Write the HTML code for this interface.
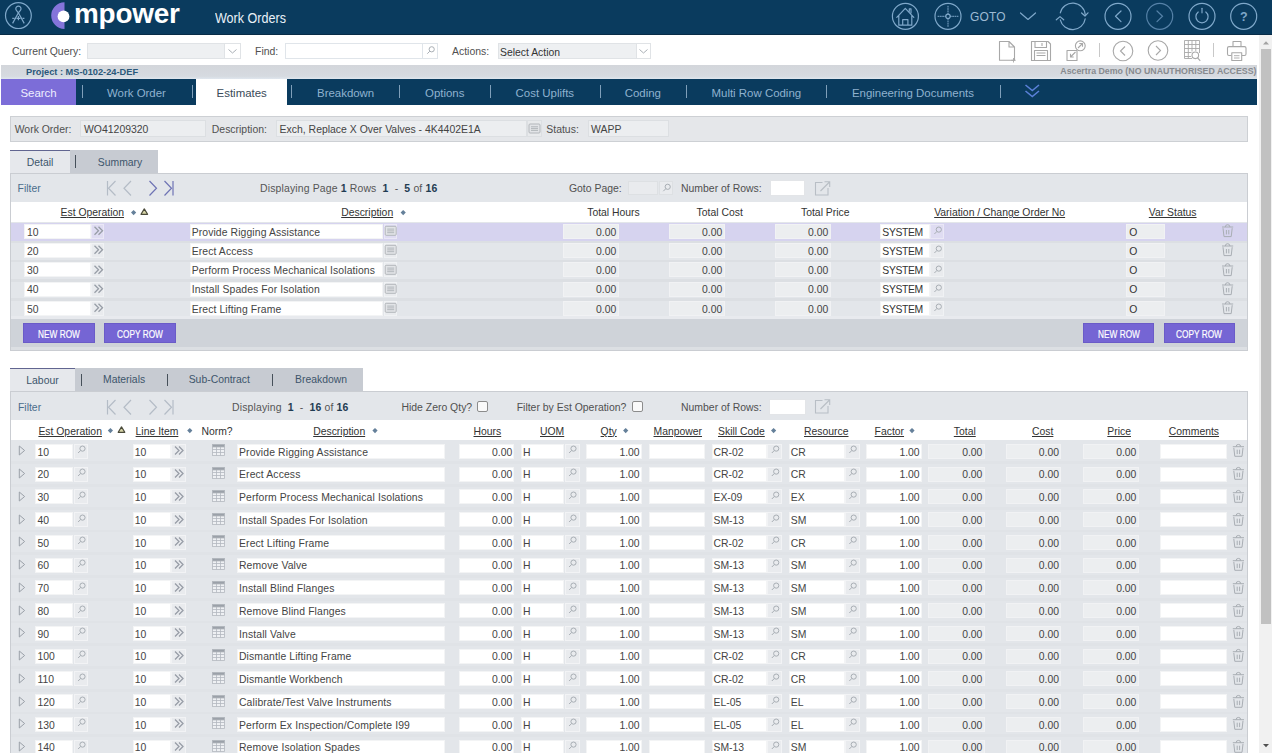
<!DOCTYPE html><html><head><meta charset="utf-8"><title>Work Orders</title><style>
html,body{margin:0;padding:0;width:1272px;height:753px;overflow:hidden;background:#fff;position:relative;font-family:"Liberation Sans",sans-serif;}
.t{position:absolute;white-space:pre;line-height:1;}
.b{position:absolute;box-sizing:border-box;}
svg.b{overflow:visible;}
.u{text-decoration:underline;text-underline-offset:1.5px;}
</style></head><body>
<div class="b" style="left:0.0px;top:0.0px;width:1272.0px;height:35.0px;background:#0a3b5e;"></div>
<div class="b" style="left:0.0px;top:34.0px;width:1272.0px;height:1.0px;background:#082c47;"></div>
<svg class="b" style="left:0px;top:0px;" width="40" height="35" viewBox="0 0 40 35"><g fill="none" stroke="#7fa8ca" stroke-width="1.2">
<circle cx="18.4" cy="15.6" r="12.9"/>
<path d="M18.4 12.8 L16.6 10.6 A2.6 2.6 0 1 1 20.2 10.6 Z"/>
<path d="M18.4 12.8 L12.6 23.4 M18.4 12.8 L24.2 23.4 M18.4 16 V20.3"/>
<path d="M12.3 18.3 H24.8" stroke-dasharray="1.6 0.5"/>
</g></svg>
<svg class="b" style="left:48px;top:0px;" width="30" height="35" viewBox="0 0 30 35"><path d="M64.5 2.3 A13.3 13.3 0 0 0 64.5 28.9 Z" transform="translate(-48 0)" fill="#8474da"/>
<circle cx="15.5" cy="16.4" r="5.9" fill="#ffffff"/></svg>
<div class="t" style="left:74.0px;top:-0.4px;font-size:27.9px;color:#ffffff;font-weight:bold;letter-spacing:-0.2px;">mpower</div>
<div class="t" style="left:215.2px;top:10.9px;font-size:14.2px;color:#e8f0f8;transform:scaleX(0.885);transform-origin:0 0;">Work Orders</div>
<svg class="b" style="left:0px;top:0px;" width="1272" height="35" viewBox="0 0 1272 35"><g fill="none" stroke="#7fa8ca" stroke-width="1.2" stroke-linejoin="round" stroke-linecap="round">
<circle cx="905.4" cy="16.3" r="13" fill="none" stroke="#7fa8ca" stroke-width="1.2" opacity="1.0"/>
<path d="M896.8 17.3 L905.3 8.3 L913.8 17.3 M898.8 15.3 V25.2 H911.8 V15.3 M902.7 25.2 V19.6 H907.9 V25.2 M909.3 11.3 V8.8 H911 V13"/>
<circle cx="948" cy="16.3" r="13" fill="none" stroke="#7fa8ca" stroke-width="1.2" opacity="1.0"/>
<path d="M948 6.2 V14 M948 18.6 V26.4 M938 16.3 H945.7 M950.3 16.3 H958" stroke-dasharray="1 1.3" stroke-width="1"/>
<circle cx="948" cy="16.3" r="2.2"/>
<path d="M1020.5 13 L1028 19.5 L1035.5 13"/>
<path d="M1060.3 12.8 A12.7 12.7 0 0 1 1085.3 14.8"/>
<path d="M1085.2 18.8 A12.7 12.7 0 0 1 1060.3 19.8"/>
<path d="M1081.6 13 L1085 16 L1088 12.8"/>
<path d="M1056.3 19.8 L1060 16.6 L1063.7 19.8"/>
<circle cx="1118" cy="16.3" r="13" fill="none" stroke="#7fa8ca" stroke-width="1.2" opacity="1.0"/>
<path d="M1121 11 L1115.5 16.3 L1121 21.6"/>
</g>
<g fill="none" stroke="#5682a8" stroke-width="1.2" stroke-linecap="round">
<circle cx="1159.7" cy="16.3" r="13" fill="none" stroke="#5682a8" stroke-width="1.2" opacity="1.0"/>
<path d="M1157 11 L1162.5 16.3 L1157 21.6"/>
</g>
<g fill="none" stroke="#7fa8ca" stroke-width="1.2" stroke-linecap="round">
<circle cx="1202" cy="16.3" r="13" fill="none" stroke="#7fa8ca" stroke-width="1.2" opacity="1.0"/>
<path d="M1198.2 12 A6.1 6.1 0 1 0 1205.8 12"/>
<path d="M1202 8.3 V12.8"/>
<circle cx="1243.7" cy="16.3" r="13" fill="none" stroke="#7fa8ca" stroke-width="1.2" opacity="1.0"/>
</g>
<text x="1243.9" y="21" font-family="Liberation Sans" font-size="12.5" font-weight="bold" fill="#7fa8ca" text-anchor="middle">?</text>
</svg>
<div class="t" style="left:969.8px;top:11.1px;font-size:12.6px;color:#9dbad3;letter-spacing:0.2px;transform:scaleX(0.95);transform-origin:0 0;">GOTO</div>
<div class="t" style="left:12.0px;top:47.2px;font-size:10.45px;color:#505050;">Current Query:</div>
<div class="b" style="left:87.0px;top:43.0px;width:154.0px;height:16.0px;background:#eef0f2;border:1px solid #e0e3e6;"></div>
<div class="b" style="left:224.0px;top:43.0px;width:17.0px;height:16.0px;background:#fff;border:1px solid #e0e3e6;"></div>
<svg class="b" style="left:224px;top:43px;" width="17" height="16" viewBox="0 0 17 16"><path d="M4.5 6.5 L8.5 10 L12.5 6.5" fill="none" stroke="#aab0b6" stroke-width="1"/></svg>
<div class="t" style="left:255.0px;top:47.2px;font-size:10.45px;color:#505050;">Find:</div>
<div class="b" style="left:285.0px;top:43.0px;width:153.0px;height:16.0px;background:#fff;border:1px solid #e0e5ea;"></div>
<div class="b" style="left:422.0px;top:43.0px;width:16.0px;height:16.0px;background:#fff;border:1px solid #e0e5ea;"></div>
<svg class="b" style="left:422px;top:43px;" width="16" height="16" viewBox="0 0 16 16"><g fill="none" stroke="#a8aeb4" stroke-width="1"><circle cx="9.7" cy="6.3" r="2.6"/><path d="M7.8 8.2 L5.3 10.7"/></g></svg>
<div class="t" style="left:452.0px;top:47.2px;font-size:10.45px;color:#505050;">Actions:</div>
<div class="b" style="left:498.0px;top:43.0px;width:153.0px;height:16.0px;background:#eef0f2;border:1px solid #e0e3e6;"></div>
<div class="b" style="left:636.0px;top:43.0px;width:15.0px;height:16.0px;background:#fff;border:1px solid #e0e3e6;"></div>
<svg class="b" style="left:636px;top:43px;" width="15" height="16" viewBox="0 0 15 16"><path d="M3.5 6.5 L7.5 10 L11.5 6.5" fill="none" stroke="#aab0b6" stroke-width="1"/></svg>
<div class="t" style="left:500.0px;top:47.5px;font-size:10.4px;color:#333;">Select Action</div>
<svg class="b" style="left:990px;top:36px;" width="270" height="28" viewBox="0 0 270 28"><g fill="none" stroke="#a8a8a8" stroke-width="1.1" stroke-linejoin="round">
<path d="M9.5 5.5 H19 L24.5 11 V24.3 H9.5 Z M19 5.5 V11 H24.5"/>
<path d="M23.5 22 V26.5 M21.3 24.3 H25.7" stroke-width="0.9"/>
<path d="M41.5 5.5 H58 L60.5 8 V24.5 H41.5 Z M45 5.5 V11.5 H56.5 V5.5 M44.5 24.5 V14.5 H57.5 V24.5 M52 7 V10 M46.5 17 H55.5 M46.5 19.5 H55.5"/>
<path d="M77 14.5 H87 V24.5 H77 Z M80.5 21 L85.5 16 M80.5 17.8 V21 H83.7 M88 12 L92.5 7.5 M89.3 7.5 H92.5 V10.7" />
<circle cx="90.3" cy="9.8" r="4.9"/>
</g>
<path d="M109.5 7 V21" stroke="#c8c8c8" stroke-width="1"/>
<g fill="none" stroke="#a8a8a8" stroke-width="1.1">
<circle cx="133" cy="15" r="9.8"/>
<path d="M135 10.5 L130.5 15 L135 19.5"/>
<circle cx="168" cy="14.5" r="9.8"/>
<path d="M166 10 L170.5 14.5 L166 19"/>
<path d="M194.5 4.5 H209.5 V17 M194.5 4.5 V22.5 H202 M194.5 8.5 H209.5 M194.5 12.5 H209.5 M194.5 16.5 H201.5 M194.5 20.5 H201 M198.3 4.5 V22.5 M202 4.5 V15.5 M205.8 4.5 V15" stroke-width="0.9"/>
<circle cx="205.3" cy="19.3" r="3.3"/>
<path d="M207.6 21.8 L210.3 24.8" />
</g>
<path d="M223.5 7 V21" stroke="#c8c8c8" stroke-width="1"/>
<g fill="none" stroke="#a8a8a8" stroke-width="1.1" stroke-linejoin="round">
<path d="M243 10.6 V5.5 H251 V10.6"/>
<path d="M241.5 19.5 H239 Q237.5 19.5 237.5 18 V12.1 Q237.5 10.6 239 10.6 H254.5 Q256 10.6 256 12.1 V18 Q256 19.5 254.5 19.5 H252"/>
<rect x="241.8" y="16.7" width="9.9" height="7.8" fill="#fff"/>
<path d="M244 19.7 H249.5 M244 22 H249.5" stroke-width="0.9"/>
</g>
</svg>
<div class="b" style="left:1.0px;top:64.5px;width:1256.0px;height:14.1px;background:linear-gradient(#d3d6db,#d6dae0 80%,#dfe6ee);"></div>
<div class="t" style="left:26.0px;top:68.4px;font-size:9.25px;color:#2a587a;font-weight:bold;">Project : MS-0102-24-DEF</div>
<div class="t" style="right:15.5px;top:67.4px;font-size:8.8px;color:#878a8e;font-weight:bold;">Ascertra Demo (NO UNAUTHORISED ACCESS)</div>
<div class="b" style="left:1.0px;top:78.6px;width:1256.0px;height:26.6px;background:#0a3b5e;"></div>
<div class="b" style="left:1.0px;top:78.6px;width:75.0px;height:26.6px;background:#7c6dd8;"></div>
<div class="b" style="left:196.0px;top:79.0px;width:91.0px;height:29.0px;background:#ffffff;"></div>
<div class="t" style="left:20.4px;top:87.9px;font-size:11.45px;color:#eeeeff;">Search</div>
<div class="t" style="left:107.0px;top:87.9px;font-size:11.45px;color:#8fb2cf;">Work Order</div>
<div class="t" style="left:216.6px;top:87.9px;font-size:11.45px;color:#3a4a58;">Estimates</div>
<div class="t" style="left:317.0px;top:87.9px;font-size:11.45px;color:#8fb2cf;">Breakdown</div>
<div class="t" style="left:425.0px;top:87.9px;font-size:11.45px;color:#8fb2cf;">Options</div>
<div class="t" style="left:515.6px;top:87.9px;font-size:11.45px;color:#8fb2cf;">Cost Uplifts</div>
<div class="t" style="left:624.7px;top:87.9px;font-size:11.45px;color:#8fb2cf;">Coding</div>
<div class="t" style="left:711.5px;top:87.9px;font-size:11.45px;color:#8fb2cf;">Multi Row Coding</div>
<div class="t" style="left:851.9px;top:87.9px;font-size:11.45px;color:#8fb2cf;">Engineering Documents</div>
<div class="b" style="left:82.0px;top:85.0px;width:1.0px;height:13.0px;background:#7f9fba;"></div>
<div class="b" style="left:192.0px;top:85.0px;width:1.0px;height:13.0px;background:#7f9fba;"></div>
<div class="b" style="left:291.0px;top:85.0px;width:1.0px;height:13.0px;background:#7f9fba;"></div>
<div class="b" style="left:399.0px;top:85.0px;width:1.0px;height:13.0px;background:#7f9fba;"></div>
<div class="b" style="left:490.0px;top:85.0px;width:1.0px;height:13.0px;background:#7f9fba;"></div>
<div class="b" style="left:600.0px;top:85.0px;width:1.0px;height:13.0px;background:#7f9fba;"></div>
<div class="b" style="left:686.0px;top:85.0px;width:1.0px;height:13.0px;background:#7f9fba;"></div>
<div class="b" style="left:826.0px;top:85.0px;width:1.0px;height:13.0px;background:#7f9fba;"></div>
<div class="b" style="left:1000.0px;top:85.0px;width:1.0px;height:13.0px;background:#7f9fba;"></div>
<svg class="b" style="left:1020px;top:80px;" width="25" height="22" viewBox="0 0 25 22"><g fill="none" stroke="#5a80d8" stroke-width="1.6" stroke-linejoin="miter"><path d="M5.5 5 L12.3 10.5 L19 5 M5.5 11 L12.3 16.5 L19 11"/></g></svg>
<div class="b" style="left:1259.0px;top:35.0px;width:13.0px;height:718.0px;background:#f1f1f1;"></div>
<div class="b" style="left:1261.0px;top:49.0px;width:10.0px;height:574.5px;background:#c1c1c1;"></div>
<svg class="b" style="left:1259px;top:35px;" width="13" height="718" viewBox="0 0 13 718"><path d="M4 9.5 L7 6.3 L10 9.5 Z" fill="#a3a3a3"/><path d="M4 709 L7 712.3 L10 709 Z" fill="#505050"/></svg>
<div class="b" style="left:10.0px;top:116.0px;width:1238.0px;height:25.8px;background:#e5e7ea;border:1px solid #cdd0d4;"></div>
<div class="t" style="left:14.7px;top:125.2px;font-size:10.45px;color:#505050;">Work Order:</div>
<div class="b" style="left:80.0px;top:120.0px;width:126.0px;height:17.0px;background:#eceef0;border:1px solid #dcdfe2;"></div>
<div class="t" style="left:84.0px;top:125.2px;font-size:10.45px;color:#444;">WO41209320</div>
<div class="t" style="left:211.8px;top:125.2px;font-size:10.45px;color:#505050;">Description:</div>
<div class="b" style="left:275.6px;top:120.0px;width:251.4px;height:17.0px;background:#eceef0;border:1px solid #dcdfe2;"></div>
<div class="t" style="left:279.6px;top:125.2px;font-size:10.45px;color:#444;">Exch, Replace X Over Valves - 4K4402E1A</div>
<div class="b" style="left:527.0px;top:120.0px;width:15.0px;height:17.0px;background:#e8eaec;border:1px solid #dcdfe2;"></div>
<svg class="b" style="left:527px;top:120px;" width="15" height="17" viewBox="0 0 15 17"><g fill="none" stroke="#adb1b6" stroke-width="0.9"><rect x="2" y="4" width="11" height="9" rx="1" fill="#e2e4e7"/><path d="M4 6.8 H11 M4 8.6 H11 M4 10.4 H11"/></g></svg>
<div class="t" style="left:546.3px;top:125.2px;font-size:10.45px;color:#505050;">Status:</div>
<div class="b" style="left:587.5px;top:120.0px;width:81.5px;height:17.0px;background:#eceef0;border:1px solid #dcdfe2;"></div>
<div class="t" style="left:591.0px;top:125.2px;font-size:10.45px;color:#444;">WAPP</div>
<div class="b" style="left:10.4px;top:150.0px;width:59.6px;height:23.5px;background:#e6e8ec;border-top:1.6px solid #616590;"></div>
<div class="b" style="left:70.0px;top:150.0px;width:88.0px;height:23.5px;background:#c7cbd2;"></div>
<div class="b" style="left:75.0px;top:154.5px;width:1.0px;height:13.0px;background:#46505a;"></div>
<div class="t" style="left:26.8px;top:158.1px;font-size:10.4px;color:#3d556b;">Detail</div>
<div class="t" style="left:97.8px;top:157.9px;font-size:10.4px;color:#3d556b;">Summary</div>
<div class="b" style="left:10.0px;top:173.0px;width:1238.0px;height:177.5px;background:#e3e6ea;border:1px solid #cacdd2;"></div>
<div class="b" style="left:11.0px;top:202.3px;width:1236.0px;height:20.0px;background:#ffffff;"></div>
<div class="t" style="left:17.6px;top:184.2px;font-size:10.4px;color:#4b6d8c;">Filter</div>
<svg class="b" style="left:105.5px;top:180.2px;" width="70" height="17" viewBox="0 0 70 17"><g fill="none" stroke-width="1.2" stroke-linejoin="miter">
<path d="M1.5 1 V15.5" stroke="#b4bcc6"/><path d="M9.5 1 L2.5 8.25 L9.5 15.5" stroke="#b4bcc6"/>
<path d="M25 1 L18 8.25 L25 15.5" stroke="#b4bcc6"/>
<path d="M43.5 1 L50.5 8.25 L43.5 15.5" stroke="#6e73b4"/>
<path d="M58.5 1 L65.5 8.25 L58.5 15.5" stroke="#6e73b4"/><path d="M67 1 V15.5" stroke="#6e73b4"/>
</g></svg>
<div class="t" style="left:260px;top:184.2px;font-size:10.45px;color:#555;letter-spacing:0.15px;">Displaying Page <b style="color:#1f3c52">1</b> Rows  <b style="color:#1f3c52">1</b>  -  <b style="color:#1f3c52">5</b> of <b style="color:#1f3c52">16</b></div>
<div class="t" style="left:568.9px;top:184.2px;font-size:10.45px;color:#505050;">Goto Page:</div>
<div class="b" style="left:627.8px;top:180.6px;width:30.7px;height:14.4px;background:#e9ebee;border:1px solid #dde0e3;"></div>
<div class="b" style="left:658.5px;top:180.6px;width:14.1px;height:14.4px;background:#e9ebee;border:1px solid #dde0e3;"></div>
<svg class="b" style="left:658.5px;top:180.6px;" width="14" height="15" viewBox="0 0 14 15"><g fill="none" stroke="#a8aeb4" stroke-width="1"><circle cx="8.7" cy="5.8" r="2.6"/><path d="M6.8 7.7 L4.3 10.2"/></g></svg>
<div class="t" style="left:681.0px;top:184.2px;font-size:10.45px;color:#505050;">Number of Rows:</div>
<div class="b" style="left:769.8px;top:180.2px;width:35.6px;height:15.8px;background:#ffffff;border:1px solid #e3e5e8;"></div>
<svg class="b" style="left:813px;top:179px;" width="20" height="18" viewBox="0 0 20 18"><g fill="none" stroke="#b8bec5" stroke-width="1.1"><path d="M9.5 3.5 H2.5 V16.0 H15.0 V9.0"/><path d="M7.5 12.0 L16.5 3.0 M11.5 2.7 H16.7 V8.0"/></g></svg>
<div class="t" style="left:60.5px;top:208.2px;font-size:10.4px;color:#333;text-decoration:underline;">Est Operation</div>
<svg class="b" style="left:0px;top:195px;" width="1272" height="30" viewBox="0 0 1272 30"><path d="M133.6 15.000000000000002 L136.2 17.6 L133.6 20.200000000000003 L131.0 17.6 Z" fill="#65809a"/><path d="M144.3 13.899999999999999 L147.60000000000002 19.299999999999997 L141.0 19.299999999999997 Z" fill="#d8d6a8" stroke="#4a4a3a" stroke-width="1.2" stroke-linejoin="round"/><path d="M403.2 15.000000000000002 L405.8 17.6 L403.2 20.200000000000003 L400.59999999999997 17.6 Z" fill="#65809a"/></svg>
<div class="t" style="left:341.2px;top:208.2px;font-size:10.4px;color:#333;text-decoration:underline;">Description</div>
<div class="t" style="left:587.2px;top:208.2px;font-size:10.4px;color:#333;">Total Hours</div>
<div class="t" style="left:696.6px;top:208.2px;font-size:10.4px;color:#333;">Total Cost</div>
<div class="t" style="left:801.0px;top:208.2px;font-size:10.4px;color:#333;">Total Price</div>
<div class="t" style="left:934.2px;top:208.2px;font-size:10.4px;color:#333;text-decoration:underline;">Variation / Change Order No</div>
<div class="t" style="left:1148.8px;top:208.2px;font-size:10.4px;color:#333;text-decoration:underline;">Var Status</div>
<div class="b" style="left:11.0px;top:222.5px;width:1236.0px;height:18.2px;background:#d6d3ef;"></div>
<div class="b" style="left:11.0px;top:240.7px;width:1236.0px;height:2.4px;background:#dcdfe3;"></div>
<div class="b" style="left:23.6px;top:223.8px;width:67.4px;height:15.2px;background:#ffffff;border:1px solid #f3f4f5;"></div>
<div class="t" style="left:27.0px;top:227.5px;font-size:10.4px;color:#444;">10</div>
<div class="b" style="left:91.0px;top:223.8px;width:13.0px;height:15.2px;background:rgba(255,255,255,0.22);border:1px solid rgba(255,255,255,0.35);"></div>
<div class="b" style="left:189.5px;top:223.8px;width:193.5px;height:15.2px;background:#ffffff;border:1px solid #f3f4f5;"></div>
<div class="t" style="left:191.7px;top:227.5px;font-size:10.4px;color:#444;letter-spacing:0.1px;">Provide Rigging Assistance</div>
<div class="b" style="left:383.5px;top:223.8px;width:13.5px;height:15.2px;background:rgba(255,255,255,0.22);border:1px solid rgba(255,255,255,0.35);"></div>
<div class="b" style="left:563.2px;top:223.8px;width:55.8px;height:15.2px;background:#eceef0;border:1px solid #f1f2f4;"></div>
<div class="t" style="right:655.8px;top:227.5px;font-size:10.4px;color:#444;">0.00</div>
<div class="b" style="left:668.5px;top:223.8px;width:56.5px;height:15.2px;background:#eceef0;border:1px solid #f1f2f4;"></div>
<div class="t" style="right:549.8px;top:227.5px;font-size:10.4px;color:#444;">0.00</div>
<div class="b" style="left:774.5px;top:223.8px;width:56.5px;height:15.2px;background:#eceef0;border:1px solid #f1f2f4;"></div>
<div class="t" style="right:443.8px;top:227.5px;font-size:10.4px;color:#444;">0.00</div>
<div class="b" style="left:880.0px;top:223.8px;width:50.0px;height:15.2px;background:#ffffff;border:1px solid #f3f4f5;"></div>
<div class="t" style="left:882.3px;top:227.5px;font-size:10.4px;color:#333;letter-spacing:-0.35px;">SYSTEM</div>
<div class="b" style="left:930.3px;top:223.8px;width:13.7px;height:15.2px;background:rgba(255,255,255,0.22);border:1px solid rgba(255,255,255,0.35);"></div>
<div class="b" style="left:1126.4px;top:223.8px;width:38.6px;height:15.2px;background:#eceef0;border:1px solid #f1f2f4;"></div>
<div class="t" style="left:1129.2px;top:227.5px;font-size:10.4px;color:#333;">O</div>
<svg class="b" style="left:0px;top:222px;" width="1272" height="19" viewBox="0 0 1272 19"><g fill="none" stroke="#979da6" stroke-width="1.3"><path d="M94.5 4.800000000000001 L98.5 8.8 L94.5 12.8 M98.5 4.800000000000001 L102.5 8.8 L98.5 12.8"/></g><g fill="none" stroke="#adb1b6" stroke-width="0.9"><rect x="385.2" y="4.3" width="11" height="9" rx="1" fill="#e2e4e7"/><path d="M387.2 7.1 H394.2 M387.2 8.899999999999999 H394.2 M387.2 10.7 H394.2"/></g><g fill="none" stroke="#a8aeb4" stroke-width="1"><circle cx="938.8000000000001" cy="7.6000000000000005" r="2.6"/><path d="M936.9 9.5 L934.4 12.0"/></g><g fill="none" stroke="#a9aeb4" stroke-width="1" stroke-linejoin="round"><path d="M1222.0 5.0 H1233.1999999999998"/><path d="M1225.3 5.0 A2.3 2.3 0 0 1 1229.8999999999999 5.0"/><path d="M1223.0 6.199999999999999 L1224.0 14.6 H1231.1999999999998 L1232.1999999999998 6.199999999999999"/><path d="M1226.3999999999999 8.0 V12.399999999999999 M1228.8 8.0 V12.399999999999999"/></g></svg>
<div class="b" style="left:11.0px;top:259.9px;width:1236.0px;height:2.4px;background:#dcdfe3;"></div>
<div class="b" style="left:23.6px;top:243.1px;width:67.4px;height:15.2px;background:#ffffff;border:1px solid #f3f4f5;"></div>
<div class="t" style="left:27.0px;top:246.7px;font-size:10.4px;color:#444;">20</div>
<div class="b" style="left:91.0px;top:243.1px;width:13.0px;height:15.2px;background:rgba(255,255,255,0.22);border:1px solid rgba(255,255,255,0.35);"></div>
<div class="b" style="left:189.5px;top:243.1px;width:193.5px;height:15.2px;background:#ffffff;border:1px solid #f3f4f5;"></div>
<div class="t" style="left:191.7px;top:246.7px;font-size:10.4px;color:#444;letter-spacing:0.1px;">Erect Access</div>
<div class="b" style="left:383.5px;top:243.1px;width:13.5px;height:15.2px;background:rgba(255,255,255,0.22);border:1px solid rgba(255,255,255,0.35);"></div>
<div class="b" style="left:563.2px;top:243.1px;width:55.8px;height:15.2px;background:#eceef0;border:1px solid #f1f2f4;"></div>
<div class="t" style="right:655.8px;top:246.7px;font-size:10.4px;color:#444;">0.00</div>
<div class="b" style="left:668.5px;top:243.1px;width:56.5px;height:15.2px;background:#eceef0;border:1px solid #f1f2f4;"></div>
<div class="t" style="right:549.8px;top:246.7px;font-size:10.4px;color:#444;">0.00</div>
<div class="b" style="left:774.5px;top:243.1px;width:56.5px;height:15.2px;background:#eceef0;border:1px solid #f1f2f4;"></div>
<div class="t" style="right:443.8px;top:246.7px;font-size:10.4px;color:#444;">0.00</div>
<div class="b" style="left:880.0px;top:243.1px;width:50.0px;height:15.2px;background:#ffffff;border:1px solid #f3f4f5;"></div>
<div class="t" style="left:882.3px;top:246.7px;font-size:10.4px;color:#333;letter-spacing:-0.35px;">SYSTEM</div>
<div class="b" style="left:930.3px;top:243.1px;width:13.7px;height:15.2px;background:rgba(255,255,255,0.22);border:1px solid rgba(255,255,255,0.35);"></div>
<div class="b" style="left:1126.4px;top:243.1px;width:38.6px;height:15.2px;background:#eceef0;border:1px solid #f1f2f4;"></div>
<div class="t" style="left:1129.2px;top:246.7px;font-size:10.4px;color:#333;">O</div>
<svg class="b" style="left:0px;top:241px;" width="1272" height="19" viewBox="0 0 1272 19"><g fill="none" stroke="#979da6" stroke-width="1.3"><path d="M94.5 4.800000000000001 L98.5 8.8 L94.5 12.8 M98.5 4.800000000000001 L102.5 8.8 L98.5 12.8"/></g><g fill="none" stroke="#adb1b6" stroke-width="0.9"><rect x="385.2" y="4.3" width="11" height="9" rx="1" fill="#e2e4e7"/><path d="M387.2 7.1 H394.2 M387.2 8.899999999999999 H394.2 M387.2 10.7 H394.2"/></g><g fill="none" stroke="#a8aeb4" stroke-width="1"><circle cx="938.8000000000001" cy="7.6000000000000005" r="2.6"/><path d="M936.9 9.5 L934.4 12.0"/></g><g fill="none" stroke="#a9aeb4" stroke-width="1" stroke-linejoin="round"><path d="M1222.0 5.0 H1233.1999999999998"/><path d="M1225.3 5.0 A2.3 2.3 0 0 1 1229.8999999999999 5.0"/><path d="M1223.0 6.199999999999999 L1224.0 14.6 H1231.1999999999998 L1232.1999999999998 6.199999999999999"/><path d="M1226.3999999999999 8.0 V12.399999999999999 M1228.8 8.0 V12.399999999999999"/></g></svg>
<div class="b" style="left:11.0px;top:279.2px;width:1236.0px;height:2.4px;background:#dcdfe3;"></div>
<div class="b" style="left:23.6px;top:262.3px;width:67.4px;height:15.2px;background:#ffffff;border:1px solid #f3f4f5;"></div>
<div class="t" style="left:27.0px;top:266.0px;font-size:10.4px;color:#444;">30</div>
<div class="b" style="left:91.0px;top:262.3px;width:13.0px;height:15.2px;background:rgba(255,255,255,0.22);border:1px solid rgba(255,255,255,0.35);"></div>
<div class="b" style="left:189.5px;top:262.3px;width:193.5px;height:15.2px;background:#ffffff;border:1px solid #f3f4f5;"></div>
<div class="t" style="left:191.7px;top:266.0px;font-size:10.4px;color:#444;letter-spacing:0.1px;">Perform Process Mechanical Isolations</div>
<div class="b" style="left:383.5px;top:262.3px;width:13.5px;height:15.2px;background:rgba(255,255,255,0.22);border:1px solid rgba(255,255,255,0.35);"></div>
<div class="b" style="left:563.2px;top:262.3px;width:55.8px;height:15.2px;background:#eceef0;border:1px solid #f1f2f4;"></div>
<div class="t" style="right:655.8px;top:266.0px;font-size:10.4px;color:#444;">0.00</div>
<div class="b" style="left:668.5px;top:262.3px;width:56.5px;height:15.2px;background:#eceef0;border:1px solid #f1f2f4;"></div>
<div class="t" style="right:549.8px;top:266.0px;font-size:10.4px;color:#444;">0.00</div>
<div class="b" style="left:774.5px;top:262.3px;width:56.5px;height:15.2px;background:#eceef0;border:1px solid #f1f2f4;"></div>
<div class="t" style="right:443.8px;top:266.0px;font-size:10.4px;color:#444;">0.00</div>
<div class="b" style="left:880.0px;top:262.3px;width:50.0px;height:15.2px;background:#ffffff;border:1px solid #f3f4f5;"></div>
<div class="t" style="left:882.3px;top:266.0px;font-size:10.4px;color:#333;letter-spacing:-0.35px;">SYSTEM</div>
<div class="b" style="left:930.3px;top:262.3px;width:13.7px;height:15.2px;background:rgba(255,255,255,0.22);border:1px solid rgba(255,255,255,0.35);"></div>
<div class="b" style="left:1126.4px;top:262.3px;width:38.6px;height:15.2px;background:#eceef0;border:1px solid #f1f2f4;"></div>
<div class="t" style="left:1129.2px;top:266.0px;font-size:10.4px;color:#333;">O</div>
<svg class="b" style="left:0px;top:261px;" width="1272" height="19" viewBox="0 0 1272 19"><g fill="none" stroke="#979da6" stroke-width="1.3"><path d="M94.5 4.800000000000001 L98.5 8.8 L94.5 12.8 M98.5 4.800000000000001 L102.5 8.8 L98.5 12.8"/></g><g fill="none" stroke="#adb1b6" stroke-width="0.9"><rect x="385.2" y="4.3" width="11" height="9" rx="1" fill="#e2e4e7"/><path d="M387.2 7.1 H394.2 M387.2 8.899999999999999 H394.2 M387.2 10.7 H394.2"/></g><g fill="none" stroke="#a8aeb4" stroke-width="1"><circle cx="938.8000000000001" cy="7.6000000000000005" r="2.6"/><path d="M936.9 9.5 L934.4 12.0"/></g><g fill="none" stroke="#a9aeb4" stroke-width="1" stroke-linejoin="round"><path d="M1222.0 5.0 H1233.1999999999998"/><path d="M1225.3 5.0 A2.3 2.3 0 0 1 1229.8999999999999 5.0"/><path d="M1223.0 6.199999999999999 L1224.0 14.6 H1231.1999999999998 L1232.1999999999998 6.199999999999999"/><path d="M1226.3999999999999 8.0 V12.399999999999999 M1228.8 8.0 V12.399999999999999"/></g></svg>
<div class="b" style="left:11.0px;top:298.4px;width:1236.0px;height:2.4px;background:#dcdfe3;"></div>
<div class="b" style="left:23.6px;top:281.6px;width:67.4px;height:15.2px;background:#ffffff;border:1px solid #f3f4f5;"></div>
<div class="t" style="left:27.0px;top:285.2px;font-size:10.4px;color:#444;">40</div>
<div class="b" style="left:91.0px;top:281.6px;width:13.0px;height:15.2px;background:rgba(255,255,255,0.22);border:1px solid rgba(255,255,255,0.35);"></div>
<div class="b" style="left:189.5px;top:281.6px;width:193.5px;height:15.2px;background:#ffffff;border:1px solid #f3f4f5;"></div>
<div class="t" style="left:191.7px;top:285.2px;font-size:10.4px;color:#444;letter-spacing:0.1px;">Install Spades For Isolation</div>
<div class="b" style="left:383.5px;top:281.6px;width:13.5px;height:15.2px;background:rgba(255,255,255,0.22);border:1px solid rgba(255,255,255,0.35);"></div>
<div class="b" style="left:563.2px;top:281.6px;width:55.8px;height:15.2px;background:#eceef0;border:1px solid #f1f2f4;"></div>
<div class="t" style="right:655.8px;top:285.2px;font-size:10.4px;color:#444;">0.00</div>
<div class="b" style="left:668.5px;top:281.6px;width:56.5px;height:15.2px;background:#eceef0;border:1px solid #f1f2f4;"></div>
<div class="t" style="right:549.8px;top:285.2px;font-size:10.4px;color:#444;">0.00</div>
<div class="b" style="left:774.5px;top:281.6px;width:56.5px;height:15.2px;background:#eceef0;border:1px solid #f1f2f4;"></div>
<div class="t" style="right:443.8px;top:285.2px;font-size:10.4px;color:#444;">0.00</div>
<div class="b" style="left:880.0px;top:281.6px;width:50.0px;height:15.2px;background:#ffffff;border:1px solid #f3f4f5;"></div>
<div class="t" style="left:882.3px;top:285.2px;font-size:10.4px;color:#333;letter-spacing:-0.35px;">SYSTEM</div>
<div class="b" style="left:930.3px;top:281.6px;width:13.7px;height:15.2px;background:rgba(255,255,255,0.22);border:1px solid rgba(255,255,255,0.35);"></div>
<div class="b" style="left:1126.4px;top:281.6px;width:38.6px;height:15.2px;background:#eceef0;border:1px solid #f1f2f4;"></div>
<div class="t" style="left:1129.2px;top:285.2px;font-size:10.4px;color:#333;">O</div>
<svg class="b" style="left:0px;top:280px;" width="1272" height="19" viewBox="0 0 1272 19"><g fill="none" stroke="#979da6" stroke-width="1.3"><path d="M94.5 4.800000000000001 L98.5 8.8 L94.5 12.8 M98.5 4.800000000000001 L102.5 8.8 L98.5 12.8"/></g><g fill="none" stroke="#adb1b6" stroke-width="0.9"><rect x="385.2" y="4.3" width="11" height="9" rx="1" fill="#e2e4e7"/><path d="M387.2 7.1 H394.2 M387.2 8.899999999999999 H394.2 M387.2 10.7 H394.2"/></g><g fill="none" stroke="#a8aeb4" stroke-width="1"><circle cx="938.8000000000001" cy="7.6000000000000005" r="2.6"/><path d="M936.9 9.5 L934.4 12.0"/></g><g fill="none" stroke="#a9aeb4" stroke-width="1" stroke-linejoin="round"><path d="M1222.0 5.0 H1233.1999999999998"/><path d="M1225.3 5.0 A2.3 2.3 0 0 1 1229.8999999999999 5.0"/><path d="M1223.0 6.199999999999999 L1224.0 14.6 H1231.1999999999998 L1232.1999999999998 6.199999999999999"/><path d="M1226.3999999999999 8.0 V12.399999999999999 M1228.8 8.0 V12.399999999999999"/></g></svg>
<div class="b" style="left:11.0px;top:317.7px;width:1236.0px;height:2.4px;background:#dcdfe3;"></div>
<div class="b" style="left:23.6px;top:300.8px;width:67.4px;height:15.2px;background:#ffffff;border:1px solid #f3f4f5;"></div>
<div class="t" style="left:27.0px;top:304.5px;font-size:10.4px;color:#444;">50</div>
<div class="b" style="left:91.0px;top:300.8px;width:13.0px;height:15.2px;background:rgba(255,255,255,0.22);border:1px solid rgba(255,255,255,0.35);"></div>
<div class="b" style="left:189.5px;top:300.8px;width:193.5px;height:15.2px;background:#ffffff;border:1px solid #f3f4f5;"></div>
<div class="t" style="left:191.7px;top:304.5px;font-size:10.4px;color:#444;letter-spacing:0.1px;">Erect Lifting Frame</div>
<div class="b" style="left:383.5px;top:300.8px;width:13.5px;height:15.2px;background:rgba(255,255,255,0.22);border:1px solid rgba(255,255,255,0.35);"></div>
<div class="b" style="left:563.2px;top:300.8px;width:55.8px;height:15.2px;background:#eceef0;border:1px solid #f1f2f4;"></div>
<div class="t" style="right:655.8px;top:304.5px;font-size:10.4px;color:#444;">0.00</div>
<div class="b" style="left:668.5px;top:300.8px;width:56.5px;height:15.2px;background:#eceef0;border:1px solid #f1f2f4;"></div>
<div class="t" style="right:549.8px;top:304.5px;font-size:10.4px;color:#444;">0.00</div>
<div class="b" style="left:774.5px;top:300.8px;width:56.5px;height:15.2px;background:#eceef0;border:1px solid #f1f2f4;"></div>
<div class="t" style="right:443.8px;top:304.5px;font-size:10.4px;color:#444;">0.00</div>
<div class="b" style="left:880.0px;top:300.8px;width:50.0px;height:15.2px;background:#ffffff;border:1px solid #f3f4f5;"></div>
<div class="t" style="left:882.3px;top:304.5px;font-size:10.4px;color:#333;letter-spacing:-0.35px;">SYSTEM</div>
<div class="b" style="left:930.3px;top:300.8px;width:13.7px;height:15.2px;background:rgba(255,255,255,0.22);border:1px solid rgba(255,255,255,0.35);"></div>
<div class="b" style="left:1126.4px;top:300.8px;width:38.6px;height:15.2px;background:#eceef0;border:1px solid #f1f2f4;"></div>
<div class="t" style="left:1129.2px;top:304.5px;font-size:10.4px;color:#333;">O</div>
<svg class="b" style="left:0px;top:299px;" width="1272" height="19" viewBox="0 0 1272 19"><g fill="none" stroke="#979da6" stroke-width="1.3"><path d="M94.5 4.800000000000001 L98.5 8.8 L94.5 12.8 M98.5 4.800000000000001 L102.5 8.8 L98.5 12.8"/></g><g fill="none" stroke="#adb1b6" stroke-width="0.9"><rect x="385.2" y="4.3" width="11" height="9" rx="1" fill="#e2e4e7"/><path d="M387.2 7.1 H394.2 M387.2 8.899999999999999 H394.2 M387.2 10.7 H394.2"/></g><g fill="none" stroke="#a8aeb4" stroke-width="1"><circle cx="938.8000000000001" cy="7.6000000000000005" r="2.6"/><path d="M936.9 9.5 L934.4 12.0"/></g><g fill="none" stroke="#a9aeb4" stroke-width="1" stroke-linejoin="round"><path d="M1222.0 5.0 H1233.1999999999998"/><path d="M1225.3 5.0 A2.3 2.3 0 0 1 1229.8999999999999 5.0"/><path d="M1223.0 6.199999999999999 L1224.0 14.6 H1231.1999999999998 L1232.1999999999998 6.199999999999999"/><path d="M1226.3999999999999 8.0 V12.399999999999999 M1228.8 8.0 V12.399999999999999"/></g></svg>
<div class="b" style="left:11.0px;top:319.0px;width:1236.0px;height:28.3px;background:#cfd3d9;"></div>
<div class="b" style="left:11.0px;top:347.3px;width:1236.0px;height:2.3px;background:#dcdfe3;"></div>
<div class="b" style="left:11.0px;top:316.4px;width:1236.0px;height:2.4px;background:#e8eaee;"></div>
<div class="b" style="left:23.3px;top:323.0px;width:71.4px;height:20.2px;background:#7565d4;border:1px solid #6a5bc8;"></div>
<div class="t" style="left:-241.0px;width:600px;text-align:center;top:329.4px;font-size:10.6px;color:#ffffff;transform:scaleX(0.78);-webkit-text-stroke:0.2px #fff;">NEW ROW</div>
<div class="b" style="left:104.0px;top:323.0px;width:71.8px;height:20.2px;background:#7565d4;border:1px solid #6a5bc8;"></div>
<div class="t" style="left:-160.1px;width:600px;text-align:center;top:329.4px;font-size:10.6px;color:#ffffff;transform:scaleX(0.78);-webkit-text-stroke:0.2px #fff;">COPY ROW</div>
<div class="b" style="left:1083.3px;top:323.0px;width:70.7px;height:20.2px;background:#7565d4;border:1px solid #6a5bc8;"></div>
<div class="t" style="left:818.7px;width:600px;text-align:center;top:329.4px;font-size:10.6px;color:#ffffff;transform:scaleX(0.78);-webkit-text-stroke:0.2px #fff;">NEW ROW</div>
<div class="b" style="left:1164.0px;top:323.0px;width:70.8px;height:20.2px;background:#7565d4;border:1px solid #6a5bc8;"></div>
<div class="t" style="left:899.4px;width:600px;text-align:center;top:329.4px;font-size:10.6px;color:#ffffff;transform:scaleX(0.78);-webkit-text-stroke:0.2px #fff;">COPY ROW</div>
<div class="b" style="left:10.4px;top:368.4px;width:64.2px;height:22.6px;background:#e6e8ec;border-top:1.6px solid #616590;"></div>
<div class="b" style="left:74.6px;top:368.4px;width:288.1px;height:22.6px;background:#c7cbd2;"></div>
<div class="b" style="left:81.0px;top:374.0px;width:1.0px;height:12.0px;background:#46505a;"></div>
<div class="b" style="left:167.0px;top:374.0px;width:1.0px;height:12.0px;background:#46505a;"></div>
<div class="b" style="left:272.0px;top:374.0px;width:1.0px;height:12.0px;background:#46505a;"></div>
<div class="t" style="left:26.3px;top:375.5px;font-size:10.4px;color:#3d556b;">Labour</div>
<div class="t" style="left:103.0px;top:374.8px;font-size:10.4px;color:#3d556b;">Materials</div>
<div class="t" style="left:188.7px;top:374.8px;font-size:10.4px;color:#3d556b;">Sub-Contract</div>
<div class="t" style="left:295.0px;top:374.8px;font-size:10.4px;color:#3d556b;">Breakdown</div>
<div class="b" style="left:10.0px;top:390.5px;width:1238.0px;height:369.5px;background:#e3e6ea;border:1px solid #cacdd2;"></div>
<div class="b" style="left:11.0px;top:420.3px;width:1236.0px;height:20.0px;background:#ffffff;"></div>
<div class="t" style="left:18.0px;top:402.7px;font-size:10.4px;color:#4b6d8c;">Filter</div>
<svg class="b" style="left:105.5px;top:398.5px;" width="70" height="17" viewBox="0 0 70 17"><g fill="none" stroke-width="1.2" stroke-linejoin="miter">
<path d="M1.5 1 V15.5" stroke="#b4bcc6"/><path d="M9.5 1 L2.5 8.25 L9.5 15.5" stroke="#b4bcc6"/>
<path d="M25 1 L18 8.25 L25 15.5" stroke="#b4bcc6"/>
<path d="M43.5 1 L50.5 8.25 L43.5 15.5" stroke="#b4bcc6"/>
<path d="M58.5 1 L65.5 8.25 L58.5 15.5" stroke="#b4bcc6"/><path d="M67 1 V15.5" stroke="#b4bcc6"/>
</g></svg>
<div class="t" style="left:232px;top:403.4px;font-size:10.45px;color:#555;letter-spacing:0.15px;">Displaying  <b style="color:#1f3c52">1</b>  -  <b style="color:#1f3c52">16</b> of <b style="color:#1f3c52">16</b></div>
<div class="t" style="left:401.4px;top:402.7px;font-size:10.45px;color:#505050;">Hide Zero Qty?</div>
<div class="b" style="left:477.2px;top:400.5px;width:11.0px;height:11.0px;background:#fafafa;border:1px solid #8c8c8c;border-radius:2px;"></div>
<div class="t" style="left:516.7px;top:402.7px;font-size:10.45px;color:#505050;">Filter by Est Operation?</div>
<div class="b" style="left:632.2px;top:400.5px;width:11.0px;height:11.0px;background:#fafafa;border:1px solid #8c8c8c;border-radius:2px;"></div>
<div class="t" style="left:681.0px;top:402.7px;font-size:10.45px;color:#505050;">Number of Rows:</div>
<div class="b" style="left:768.8px;top:398.5px;width:36.9px;height:16.0px;background:#ffffff;border:1px solid #e3e5e8;"></div>
<svg class="b" style="left:813px;top:397px;" width="20" height="18" viewBox="0 0 20 18"><g fill="none" stroke="#b8bec5" stroke-width="1.1"><path d="M9.5 3.5 H2.5 V16.0 H15.0 V9.0"/><path d="M7.5 12.0 L16.5 3.0 M11.5 2.7 H16.7 V8.0"/></g></svg>
<div class="t" style="left:38.4px;top:426.8px;font-size:10.4px;color:#333;text-decoration:underline;">Est Operation</div>
<div class="t" style="left:135.6px;top:426.8px;font-size:10.4px;color:#333;text-decoration:underline;">Line Item</div>
<div class="t" style="left:201.4px;top:426.8px;font-size:10.4px;color:#333;">Norm?</div>
<div class="t" style="left:313.2px;top:426.8px;font-size:10.4px;color:#333;text-decoration:underline;">Description</div>
<div class="t" style="left:473.5px;top:426.8px;font-size:10.4px;color:#333;text-decoration:underline;">Hours</div>
<div class="t" style="left:540.0px;top:426.8px;font-size:10.4px;color:#333;text-decoration:underline;">UOM</div>
<div class="t" style="left:600.6px;top:426.8px;font-size:10.4px;color:#333;text-decoration:underline;">Qty</div>
<div class="t" style="left:653.5px;top:426.8px;font-size:10.4px;color:#333;text-decoration:underline;">Manpower</div>
<div class="t" style="left:718.0px;top:426.8px;font-size:10.4px;color:#333;text-decoration:underline;">Skill Code</div>
<div class="t" style="left:804.0px;top:426.8px;font-size:10.4px;color:#333;text-decoration:underline;">Resource</div>
<div class="t" style="left:874.6px;top:426.8px;font-size:10.4px;color:#333;text-decoration:underline;">Factor</div>
<div class="t" style="left:953.8px;top:426.8px;font-size:10.4px;color:#333;text-decoration:underline;">Total</div>
<div class="t" style="left:1032.0px;top:426.8px;font-size:10.4px;color:#333;text-decoration:underline;">Cost</div>
<div class="t" style="left:1107.3px;top:426.8px;font-size:10.4px;color:#333;text-decoration:underline;">Price</div>
<div class="t" style="left:1168.8px;top:426.8px;font-size:10.4px;color:#333;text-decoration:underline;">Comments</div>
<svg class="b" style="left:0px;top:413px;" width="1272" height="30" viewBox="0 0 1272 30"><path d="M110.4 15.000000000000002 L113.0 17.6 L110.4 20.200000000000003 L107.80000000000001 17.6 Z" fill="#65809a"/><path d="M121.5 13.899999999999999 L124.8 19.299999999999997 L118.2 19.299999999999997 Z" fill="#d8d6a8" stroke="#4a4a3a" stroke-width="1.2" stroke-linejoin="round"/><path d="M189.8 15.000000000000002 L192.4 17.6 L189.8 20.200000000000003 L187.20000000000002 17.6 Z" fill="#65809a"/><path d="M375.0 15.000000000000002 L377.6 17.6 L375.0 20.200000000000003 L372.4 17.6 Z" fill="#65809a"/><path d="M625.7 15.000000000000002 L628.3000000000001 17.6 L625.7 20.200000000000003 L623.1 17.6 Z" fill="#65809a"/><path d="M773.6 15.000000000000002 L776.2 17.6 L773.6 20.200000000000003 L771.0 17.6 Z" fill="#65809a"/><path d="M912.0 15.000000000000002 L914.6 17.6 L912.0 20.200000000000003 L909.4 17.6 Z" fill="#65809a"/></svg>
<div class="b" style="left:11.0px;top:461.4px;width:1236.0px;height:2.7px;background:#e0e3e7;"></div>
<div class="b" style="left:34.8px;top:443.8px;width:38.7px;height:15.2px;background:#ffffff;border:1px solid #f3f4f5;"></div>
<div class="t" style="left:37.4px;top:447.7px;font-size:10.4px;color:#444;">10</div>
<div class="b" style="left:73.5px;top:443.8px;width:14.8px;height:15.2px;background:#e9ebee;border:1px solid #f2f3f5;"></div>
<div class="b" style="left:133.0px;top:443.8px;width:38.0px;height:15.2px;background:#ffffff;border:1px solid #f3f4f5;"></div>
<div class="t" style="left:134.8px;top:447.7px;font-size:10.4px;color:#444;">10</div>
<div class="b" style="left:171.0px;top:443.8px;width:15.0px;height:15.2px;background:#e9ebee;border:1px solid #f2f3f5;"></div>
<div class="b" style="left:237.3px;top:443.8px;width:208.0px;height:15.2px;background:#ffffff;border:1px solid #f3f4f5;"></div>
<div class="t" style="left:239.0px;top:447.7px;font-size:10.4px;color:#444;letter-spacing:0.12px;">Provide Rigging Assistance</div>
<div class="b" style="left:458.5px;top:443.8px;width:55.7px;height:15.2px;background:#ffffff;border:1px solid #f3f4f5;"></div>
<div class="t" style="right:759.8px;top:447.7px;font-size:10.4px;color:#444;">0.00</div>
<div class="b" style="left:520.6px;top:443.8px;width:43.9px;height:15.2px;background:#ffffff;border:1px solid #f3f4f5;"></div>
<div class="t" style="left:523.0px;top:447.7px;font-size:10.4px;color:#444;">H</div>
<div class="b" style="left:564.5px;top:443.8px;width:15.0px;height:15.2px;background:#e9ebee;border:1px solid #f2f3f5;"></div>
<div class="b" style="left:585.9px;top:443.8px;width:55.7px;height:15.2px;background:#ffffff;border:1px solid #f3f4f5;"></div>
<div class="t" style="right:632.4px;top:447.7px;font-size:10.4px;color:#444;">1.00</div>
<div class="b" style="left:648.7px;top:443.8px;width:56.0px;height:15.2px;background:#ffffff;border:1px solid #f3f4f5;"></div>
<div class="b" style="left:711.5px;top:443.8px;width:55.5px;height:15.2px;background:#ffffff;border:1px solid #f3f4f5;"></div>
<div class="t" style="left:713.5px;top:447.7px;font-size:10.4px;color:#444;">CR-02</div>
<div class="b" style="left:767.0px;top:443.8px;width:15.3px;height:15.2px;background:#e9ebee;border:1px solid #f2f3f5;"></div>
<div class="b" style="left:788.8px;top:443.8px;width:55.8px;height:15.2px;background:#ffffff;border:1px solid #f3f4f5;"></div>
<div class="t" style="left:790.8px;top:447.7px;font-size:10.4px;color:#444;">CR</div>
<div class="b" style="left:844.6px;top:443.8px;width:15.4px;height:15.2px;background:#e9ebee;border:1px solid #f2f3f5;"></div>
<div class="b" style="left:865.5px;top:443.8px;width:56.1px;height:15.2px;background:#ffffff;border:1px solid #f3f4f5;"></div>
<div class="t" style="right:352.4px;top:447.7px;font-size:10.4px;color:#444;">1.00</div>
<div class="b" style="left:928.4px;top:443.8px;width:56.4px;height:15.2px;background:#eceef0;border:1px solid #f1f2f4;"></div>
<div class="t" style="right:289.6px;top:447.7px;font-size:10.4px;color:#444;">0.00</div>
<div class="b" style="left:1005.8px;top:443.8px;width:55.5px;height:15.2px;background:#eceef0;border:1px solid #f1f2f4;"></div>
<div class="t" style="right:213.0px;top:447.7px;font-size:10.4px;color:#444;">0.00</div>
<div class="b" style="left:1083.0px;top:443.8px;width:55.7px;height:15.2px;background:#eceef0;border:1px solid #f1f2f4;"></div>
<div class="t" style="right:135.6px;top:447.7px;font-size:10.4px;color:#444;">0.00</div>
<div class="b" style="left:1159.7px;top:443.8px;width:67.1px;height:15.2px;background:#ffffff;border:1px solid #f3f4f5;"></div>
<svg class="b" style="left:0px;top:441px;" width="1272" height="20" viewBox="0 0 1272 20"><path d="M19.3 5.0 L24.6 9.5 L19.3 14.0 Z" fill="none" stroke="#9aa0a8" stroke-width="1"/><g fill="none" stroke="#a8aeb4" stroke-width="1"><circle cx="82.5" cy="7.6000000000000005" r="2.6"/><path d="M80.6 9.5 L78.1 12.0"/></g><g fill="none" stroke="#979da6" stroke-width="1.3"><path d="M175 5.5 L179 9.5 L175 13.5 M179 5.5 L183 9.5 L179 13.5"/></g><g fill="none" stroke="#b3b8bf" stroke-width="0.8"><rect x="212.5" y="3.5" width="12" height="11" fill="#eef0f3"/><path d="M212.5 8.5 H224.5 M212.5 11.5 H224.5 M216.5 5.5 V14.5 M220.5 5.5 V14.5"/><rect x="212.5" y="3.5" width="12" height="2.5" fill="#9ba1a9"/></g><g fill="none" stroke="#a8aeb4" stroke-width="1"><circle cx="573.5" cy="7.6000000000000005" r="2.6"/><path d="M571.5999999999999 9.5 L569.0999999999999 12.0"/></g><g fill="none" stroke="#a8aeb4" stroke-width="1"><circle cx="776.2" cy="7.6000000000000005" r="2.6"/><path d="M774.3 9.5 L771.8 12.0"/></g><g fill="none" stroke="#a8aeb4" stroke-width="1"><circle cx="853.7" cy="7.6000000000000005" r="2.6"/><path d="M851.8 9.5 L849.3 12.0"/></g><g fill="none" stroke="#a9aeb4" stroke-width="1" stroke-linejoin="round"><path d="M1232.8000000000002 5.700000000000001 H1244.0"/><path d="M1236.1000000000001 5.700000000000001 A2.3 2.3 0 0 1 1240.7 5.700000000000001"/><path d="M1233.8000000000002 6.9 L1234.8000000000002 15.3 H1242.0 L1243.0 6.9"/><path d="M1237.2 8.700000000000001 V13.100000000000001 M1239.6000000000001 8.700000000000001 V13.100000000000001"/></g></svg>
<div class="b" style="left:11.0px;top:484.2px;width:1236.0px;height:2.7px;background:#e0e3e7;"></div>
<div class="b" style="left:34.8px;top:466.6px;width:38.7px;height:15.2px;background:#ffffff;border:1px solid #f3f4f5;"></div>
<div class="t" style="left:37.4px;top:470.4px;font-size:10.4px;color:#444;">20</div>
<div class="b" style="left:73.5px;top:466.6px;width:14.8px;height:15.2px;background:#e9ebee;border:1px solid #f2f3f5;"></div>
<div class="b" style="left:133.0px;top:466.6px;width:38.0px;height:15.2px;background:#ffffff;border:1px solid #f3f4f5;"></div>
<div class="t" style="left:134.8px;top:470.4px;font-size:10.4px;color:#444;">10</div>
<div class="b" style="left:171.0px;top:466.6px;width:15.0px;height:15.2px;background:#e9ebee;border:1px solid #f2f3f5;"></div>
<div class="b" style="left:237.3px;top:466.6px;width:208.0px;height:15.2px;background:#ffffff;border:1px solid #f3f4f5;"></div>
<div class="t" style="left:239.0px;top:470.4px;font-size:10.4px;color:#444;letter-spacing:0.12px;">Erect Access</div>
<div class="b" style="left:458.5px;top:466.6px;width:55.7px;height:15.2px;background:#ffffff;border:1px solid #f3f4f5;"></div>
<div class="t" style="right:759.8px;top:470.4px;font-size:10.4px;color:#444;">0.00</div>
<div class="b" style="left:520.6px;top:466.6px;width:43.9px;height:15.2px;background:#ffffff;border:1px solid #f3f4f5;"></div>
<div class="t" style="left:523.0px;top:470.4px;font-size:10.4px;color:#444;">H</div>
<div class="b" style="left:564.5px;top:466.6px;width:15.0px;height:15.2px;background:#e9ebee;border:1px solid #f2f3f5;"></div>
<div class="b" style="left:585.9px;top:466.6px;width:55.7px;height:15.2px;background:#ffffff;border:1px solid #f3f4f5;"></div>
<div class="t" style="right:632.4px;top:470.4px;font-size:10.4px;color:#444;">1.00</div>
<div class="b" style="left:648.7px;top:466.6px;width:56.0px;height:15.2px;background:#ffffff;border:1px solid #f3f4f5;"></div>
<div class="b" style="left:711.5px;top:466.6px;width:55.5px;height:15.2px;background:#ffffff;border:1px solid #f3f4f5;"></div>
<div class="t" style="left:713.5px;top:470.4px;font-size:10.4px;color:#444;">CR-02</div>
<div class="b" style="left:767.0px;top:466.6px;width:15.3px;height:15.2px;background:#e9ebee;border:1px solid #f2f3f5;"></div>
<div class="b" style="left:788.8px;top:466.6px;width:55.8px;height:15.2px;background:#ffffff;border:1px solid #f3f4f5;"></div>
<div class="t" style="left:790.8px;top:470.4px;font-size:10.4px;color:#444;">CR</div>
<div class="b" style="left:844.6px;top:466.6px;width:15.4px;height:15.2px;background:#e9ebee;border:1px solid #f2f3f5;"></div>
<div class="b" style="left:865.5px;top:466.6px;width:56.1px;height:15.2px;background:#ffffff;border:1px solid #f3f4f5;"></div>
<div class="t" style="right:352.4px;top:470.4px;font-size:10.4px;color:#444;">1.00</div>
<div class="b" style="left:928.4px;top:466.6px;width:56.4px;height:15.2px;background:#eceef0;border:1px solid #f1f2f4;"></div>
<div class="t" style="right:289.6px;top:470.4px;font-size:10.4px;color:#444;">0.00</div>
<div class="b" style="left:1005.8px;top:466.6px;width:55.5px;height:15.2px;background:#eceef0;border:1px solid #f1f2f4;"></div>
<div class="t" style="right:213.0px;top:470.4px;font-size:10.4px;color:#444;">0.00</div>
<div class="b" style="left:1083.0px;top:466.6px;width:55.7px;height:15.2px;background:#eceef0;border:1px solid #f1f2f4;"></div>
<div class="t" style="right:135.6px;top:470.4px;font-size:10.4px;color:#444;">0.00</div>
<div class="b" style="left:1159.7px;top:466.6px;width:67.1px;height:15.2px;background:#ffffff;border:1px solid #f3f4f5;"></div>
<svg class="b" style="left:0px;top:464px;" width="1272" height="20" viewBox="0 0 1272 20"><path d="M19.3 5.0 L24.6 9.5 L19.3 14.0 Z" fill="none" stroke="#9aa0a8" stroke-width="1"/><g fill="none" stroke="#a8aeb4" stroke-width="1"><circle cx="82.5" cy="7.6000000000000005" r="2.6"/><path d="M80.6 9.5 L78.1 12.0"/></g><g fill="none" stroke="#979da6" stroke-width="1.3"><path d="M175 5.5 L179 9.5 L175 13.5 M179 5.5 L183 9.5 L179 13.5"/></g><g fill="none" stroke="#b3b8bf" stroke-width="0.8"><rect x="212.5" y="3.5" width="12" height="11" fill="#eef0f3"/><path d="M212.5 8.5 H224.5 M212.5 11.5 H224.5 M216.5 5.5 V14.5 M220.5 5.5 V14.5"/><rect x="212.5" y="3.5" width="12" height="2.5" fill="#9ba1a9"/></g><g fill="none" stroke="#a8aeb4" stroke-width="1"><circle cx="573.5" cy="7.6000000000000005" r="2.6"/><path d="M571.5999999999999 9.5 L569.0999999999999 12.0"/></g><g fill="none" stroke="#a8aeb4" stroke-width="1"><circle cx="776.2" cy="7.6000000000000005" r="2.6"/><path d="M774.3 9.5 L771.8 12.0"/></g><g fill="none" stroke="#a8aeb4" stroke-width="1"><circle cx="853.7" cy="7.6000000000000005" r="2.6"/><path d="M851.8 9.5 L849.3 12.0"/></g><g fill="none" stroke="#a9aeb4" stroke-width="1" stroke-linejoin="round"><path d="M1232.8000000000002 5.700000000000001 H1244.0"/><path d="M1236.1000000000001 5.700000000000001 A2.3 2.3 0 0 1 1240.7 5.700000000000001"/><path d="M1233.8000000000002 6.9 L1234.8000000000002 15.3 H1242.0 L1243.0 6.9"/><path d="M1237.2 8.700000000000001 V13.100000000000001 M1239.6000000000001 8.700000000000001 V13.100000000000001"/></g></svg>
<div class="b" style="left:11.0px;top:506.9px;width:1236.0px;height:2.7px;background:#e0e3e7;"></div>
<div class="b" style="left:34.8px;top:489.3px;width:38.7px;height:15.2px;background:#ffffff;border:1px solid #f3f4f5;"></div>
<div class="t" style="left:37.4px;top:493.2px;font-size:10.4px;color:#444;">30</div>
<div class="b" style="left:73.5px;top:489.3px;width:14.8px;height:15.2px;background:#e9ebee;border:1px solid #f2f3f5;"></div>
<div class="b" style="left:133.0px;top:489.3px;width:38.0px;height:15.2px;background:#ffffff;border:1px solid #f3f4f5;"></div>
<div class="t" style="left:134.8px;top:493.2px;font-size:10.4px;color:#444;">10</div>
<div class="b" style="left:171.0px;top:489.3px;width:15.0px;height:15.2px;background:#e9ebee;border:1px solid #f2f3f5;"></div>
<div class="b" style="left:237.3px;top:489.3px;width:208.0px;height:15.2px;background:#ffffff;border:1px solid #f3f4f5;"></div>
<div class="t" style="left:239.0px;top:493.2px;font-size:10.4px;color:#444;letter-spacing:0.12px;">Perform Process Mechanical Isolations</div>
<div class="b" style="left:458.5px;top:489.3px;width:55.7px;height:15.2px;background:#ffffff;border:1px solid #f3f4f5;"></div>
<div class="t" style="right:759.8px;top:493.2px;font-size:10.4px;color:#444;">0.00</div>
<div class="b" style="left:520.6px;top:489.3px;width:43.9px;height:15.2px;background:#ffffff;border:1px solid #f3f4f5;"></div>
<div class="t" style="left:523.0px;top:493.2px;font-size:10.4px;color:#444;">H</div>
<div class="b" style="left:564.5px;top:489.3px;width:15.0px;height:15.2px;background:#e9ebee;border:1px solid #f2f3f5;"></div>
<div class="b" style="left:585.9px;top:489.3px;width:55.7px;height:15.2px;background:#ffffff;border:1px solid #f3f4f5;"></div>
<div class="t" style="right:632.4px;top:493.2px;font-size:10.4px;color:#444;">1.00</div>
<div class="b" style="left:648.7px;top:489.3px;width:56.0px;height:15.2px;background:#ffffff;border:1px solid #f3f4f5;"></div>
<div class="b" style="left:711.5px;top:489.3px;width:55.5px;height:15.2px;background:#ffffff;border:1px solid #f3f4f5;"></div>
<div class="t" style="left:713.5px;top:493.2px;font-size:10.4px;color:#444;">EX-09</div>
<div class="b" style="left:767.0px;top:489.3px;width:15.3px;height:15.2px;background:#e9ebee;border:1px solid #f2f3f5;"></div>
<div class="b" style="left:788.8px;top:489.3px;width:55.8px;height:15.2px;background:#ffffff;border:1px solid #f3f4f5;"></div>
<div class="t" style="left:790.8px;top:493.2px;font-size:10.4px;color:#444;">EX</div>
<div class="b" style="left:844.6px;top:489.3px;width:15.4px;height:15.2px;background:#e9ebee;border:1px solid #f2f3f5;"></div>
<div class="b" style="left:865.5px;top:489.3px;width:56.1px;height:15.2px;background:#ffffff;border:1px solid #f3f4f5;"></div>
<div class="t" style="right:352.4px;top:493.2px;font-size:10.4px;color:#444;">1.00</div>
<div class="b" style="left:928.4px;top:489.3px;width:56.4px;height:15.2px;background:#eceef0;border:1px solid #f1f2f4;"></div>
<div class="t" style="right:289.6px;top:493.2px;font-size:10.4px;color:#444;">0.00</div>
<div class="b" style="left:1005.8px;top:489.3px;width:55.5px;height:15.2px;background:#eceef0;border:1px solid #f1f2f4;"></div>
<div class="t" style="right:213.0px;top:493.2px;font-size:10.4px;color:#444;">0.00</div>
<div class="b" style="left:1083.0px;top:489.3px;width:55.7px;height:15.2px;background:#eceef0;border:1px solid #f1f2f4;"></div>
<div class="t" style="right:135.6px;top:493.2px;font-size:10.4px;color:#444;">0.00</div>
<div class="b" style="left:1159.7px;top:489.3px;width:67.1px;height:15.2px;background:#ffffff;border:1px solid #f3f4f5;"></div>
<svg class="b" style="left:0px;top:487px;" width="1272" height="20" viewBox="0 0 1272 20"><path d="M19.3 5.0 L24.6 9.5 L19.3 14.0 Z" fill="none" stroke="#9aa0a8" stroke-width="1"/><g fill="none" stroke="#a8aeb4" stroke-width="1"><circle cx="82.5" cy="7.6000000000000005" r="2.6"/><path d="M80.6 9.5 L78.1 12.0"/></g><g fill="none" stroke="#979da6" stroke-width="1.3"><path d="M175 5.5 L179 9.5 L175 13.5 M179 5.5 L183 9.5 L179 13.5"/></g><g fill="none" stroke="#b3b8bf" stroke-width="0.8"><rect x="212.5" y="3.5" width="12" height="11" fill="#eef0f3"/><path d="M212.5 8.5 H224.5 M212.5 11.5 H224.5 M216.5 5.5 V14.5 M220.5 5.5 V14.5"/><rect x="212.5" y="3.5" width="12" height="2.5" fill="#9ba1a9"/></g><g fill="none" stroke="#a8aeb4" stroke-width="1"><circle cx="573.5" cy="7.6000000000000005" r="2.6"/><path d="M571.5999999999999 9.5 L569.0999999999999 12.0"/></g><g fill="none" stroke="#a8aeb4" stroke-width="1"><circle cx="776.2" cy="7.6000000000000005" r="2.6"/><path d="M774.3 9.5 L771.8 12.0"/></g><g fill="none" stroke="#a8aeb4" stroke-width="1"><circle cx="853.7" cy="7.6000000000000005" r="2.6"/><path d="M851.8 9.5 L849.3 12.0"/></g><g fill="none" stroke="#a9aeb4" stroke-width="1" stroke-linejoin="round"><path d="M1232.8000000000002 5.700000000000001 H1244.0"/><path d="M1236.1000000000001 5.700000000000001 A2.3 2.3 0 0 1 1240.7 5.700000000000001"/><path d="M1233.8000000000002 6.9 L1234.8000000000002 15.3 H1242.0 L1243.0 6.9"/><path d="M1237.2 8.700000000000001 V13.100000000000001 M1239.6000000000001 8.700000000000001 V13.100000000000001"/></g></svg>
<div class="b" style="left:11.0px;top:529.6px;width:1236.0px;height:2.7px;background:#e0e3e7;"></div>
<div class="b" style="left:34.8px;top:512.0px;width:38.7px;height:15.2px;background:#ffffff;border:1px solid #f3f4f5;"></div>
<div class="t" style="left:37.4px;top:515.9px;font-size:10.4px;color:#444;">40</div>
<div class="b" style="left:73.5px;top:512.0px;width:14.8px;height:15.2px;background:#e9ebee;border:1px solid #f2f3f5;"></div>
<div class="b" style="left:133.0px;top:512.0px;width:38.0px;height:15.2px;background:#ffffff;border:1px solid #f3f4f5;"></div>
<div class="t" style="left:134.8px;top:515.9px;font-size:10.4px;color:#444;">10</div>
<div class="b" style="left:171.0px;top:512.0px;width:15.0px;height:15.2px;background:#e9ebee;border:1px solid #f2f3f5;"></div>
<div class="b" style="left:237.3px;top:512.0px;width:208.0px;height:15.2px;background:#ffffff;border:1px solid #f3f4f5;"></div>
<div class="t" style="left:239.0px;top:515.9px;font-size:10.4px;color:#444;letter-spacing:0.12px;">Install Spades For Isolation</div>
<div class="b" style="left:458.5px;top:512.0px;width:55.7px;height:15.2px;background:#ffffff;border:1px solid #f3f4f5;"></div>
<div class="t" style="right:759.8px;top:515.9px;font-size:10.4px;color:#444;">0.00</div>
<div class="b" style="left:520.6px;top:512.0px;width:43.9px;height:15.2px;background:#ffffff;border:1px solid #f3f4f5;"></div>
<div class="t" style="left:523.0px;top:515.9px;font-size:10.4px;color:#444;">H</div>
<div class="b" style="left:564.5px;top:512.0px;width:15.0px;height:15.2px;background:#e9ebee;border:1px solid #f2f3f5;"></div>
<div class="b" style="left:585.9px;top:512.0px;width:55.7px;height:15.2px;background:#ffffff;border:1px solid #f3f4f5;"></div>
<div class="t" style="right:632.4px;top:515.9px;font-size:10.4px;color:#444;">1.00</div>
<div class="b" style="left:648.7px;top:512.0px;width:56.0px;height:15.2px;background:#ffffff;border:1px solid #f3f4f5;"></div>
<div class="b" style="left:711.5px;top:512.0px;width:55.5px;height:15.2px;background:#ffffff;border:1px solid #f3f4f5;"></div>
<div class="t" style="left:713.5px;top:515.9px;font-size:10.4px;color:#444;">SM-13</div>
<div class="b" style="left:767.0px;top:512.0px;width:15.3px;height:15.2px;background:#e9ebee;border:1px solid #f2f3f5;"></div>
<div class="b" style="left:788.8px;top:512.0px;width:55.8px;height:15.2px;background:#ffffff;border:1px solid #f3f4f5;"></div>
<div class="t" style="left:790.8px;top:515.9px;font-size:10.4px;color:#444;">SM</div>
<div class="b" style="left:844.6px;top:512.0px;width:15.4px;height:15.2px;background:#e9ebee;border:1px solid #f2f3f5;"></div>
<div class="b" style="left:865.5px;top:512.0px;width:56.1px;height:15.2px;background:#ffffff;border:1px solid #f3f4f5;"></div>
<div class="t" style="right:352.4px;top:515.9px;font-size:10.4px;color:#444;">1.00</div>
<div class="b" style="left:928.4px;top:512.0px;width:56.4px;height:15.2px;background:#eceef0;border:1px solid #f1f2f4;"></div>
<div class="t" style="right:289.6px;top:515.9px;font-size:10.4px;color:#444;">0.00</div>
<div class="b" style="left:1005.8px;top:512.0px;width:55.5px;height:15.2px;background:#eceef0;border:1px solid #f1f2f4;"></div>
<div class="t" style="right:213.0px;top:515.9px;font-size:10.4px;color:#444;">0.00</div>
<div class="b" style="left:1083.0px;top:512.0px;width:55.7px;height:15.2px;background:#eceef0;border:1px solid #f1f2f4;"></div>
<div class="t" style="right:135.6px;top:515.9px;font-size:10.4px;color:#444;">0.00</div>
<div class="b" style="left:1159.7px;top:512.0px;width:67.1px;height:15.2px;background:#ffffff;border:1px solid #f3f4f5;"></div>
<svg class="b" style="left:0px;top:510px;" width="1272" height="20" viewBox="0 0 1272 20"><path d="M19.3 5.0 L24.6 9.5 L19.3 14.0 Z" fill="none" stroke="#9aa0a8" stroke-width="1"/><g fill="none" stroke="#a8aeb4" stroke-width="1"><circle cx="82.5" cy="7.6000000000000005" r="2.6"/><path d="M80.6 9.5 L78.1 12.0"/></g><g fill="none" stroke="#979da6" stroke-width="1.3"><path d="M175 5.5 L179 9.5 L175 13.5 M179 5.5 L183 9.5 L179 13.5"/></g><g fill="none" stroke="#b3b8bf" stroke-width="0.8"><rect x="212.5" y="3.5" width="12" height="11" fill="#eef0f3"/><path d="M212.5 8.5 H224.5 M212.5 11.5 H224.5 M216.5 5.5 V14.5 M220.5 5.5 V14.5"/><rect x="212.5" y="3.5" width="12" height="2.5" fill="#9ba1a9"/></g><g fill="none" stroke="#a8aeb4" stroke-width="1"><circle cx="573.5" cy="7.6000000000000005" r="2.6"/><path d="M571.5999999999999 9.5 L569.0999999999999 12.0"/></g><g fill="none" stroke="#a8aeb4" stroke-width="1"><circle cx="776.2" cy="7.6000000000000005" r="2.6"/><path d="M774.3 9.5 L771.8 12.0"/></g><g fill="none" stroke="#a8aeb4" stroke-width="1"><circle cx="853.7" cy="7.6000000000000005" r="2.6"/><path d="M851.8 9.5 L849.3 12.0"/></g><g fill="none" stroke="#a9aeb4" stroke-width="1" stroke-linejoin="round"><path d="M1232.8000000000002 5.700000000000001 H1244.0"/><path d="M1236.1000000000001 5.700000000000001 A2.3 2.3 0 0 1 1240.7 5.700000000000001"/><path d="M1233.8000000000002 6.9 L1234.8000000000002 15.3 H1242.0 L1243.0 6.9"/><path d="M1237.2 8.700000000000001 V13.100000000000001 M1239.6000000000001 8.700000000000001 V13.100000000000001"/></g></svg>
<div class="b" style="left:11.0px;top:552.4px;width:1236.0px;height:2.7px;background:#e0e3e7;"></div>
<div class="b" style="left:34.8px;top:534.8px;width:38.7px;height:15.2px;background:#ffffff;border:1px solid #f3f4f5;"></div>
<div class="t" style="left:37.4px;top:538.7px;font-size:10.4px;color:#444;">50</div>
<div class="b" style="left:73.5px;top:534.8px;width:14.8px;height:15.2px;background:#e9ebee;border:1px solid #f2f3f5;"></div>
<div class="b" style="left:133.0px;top:534.8px;width:38.0px;height:15.2px;background:#ffffff;border:1px solid #f3f4f5;"></div>
<div class="t" style="left:134.8px;top:538.7px;font-size:10.4px;color:#444;">10</div>
<div class="b" style="left:171.0px;top:534.8px;width:15.0px;height:15.2px;background:#e9ebee;border:1px solid #f2f3f5;"></div>
<div class="b" style="left:237.3px;top:534.8px;width:208.0px;height:15.2px;background:#ffffff;border:1px solid #f3f4f5;"></div>
<div class="t" style="left:239.0px;top:538.7px;font-size:10.4px;color:#444;letter-spacing:0.12px;">Erect Lifting Frame</div>
<div class="b" style="left:458.5px;top:534.8px;width:55.7px;height:15.2px;background:#ffffff;border:1px solid #f3f4f5;"></div>
<div class="t" style="right:759.8px;top:538.7px;font-size:10.4px;color:#444;">0.00</div>
<div class="b" style="left:520.6px;top:534.8px;width:43.9px;height:15.2px;background:#ffffff;border:1px solid #f3f4f5;"></div>
<div class="t" style="left:523.0px;top:538.7px;font-size:10.4px;color:#444;">H</div>
<div class="b" style="left:564.5px;top:534.8px;width:15.0px;height:15.2px;background:#e9ebee;border:1px solid #f2f3f5;"></div>
<div class="b" style="left:585.9px;top:534.8px;width:55.7px;height:15.2px;background:#ffffff;border:1px solid #f3f4f5;"></div>
<div class="t" style="right:632.4px;top:538.7px;font-size:10.4px;color:#444;">1.00</div>
<div class="b" style="left:648.7px;top:534.8px;width:56.0px;height:15.2px;background:#ffffff;border:1px solid #f3f4f5;"></div>
<div class="b" style="left:711.5px;top:534.8px;width:55.5px;height:15.2px;background:#ffffff;border:1px solid #f3f4f5;"></div>
<div class="t" style="left:713.5px;top:538.7px;font-size:10.4px;color:#444;">CR-02</div>
<div class="b" style="left:767.0px;top:534.8px;width:15.3px;height:15.2px;background:#e9ebee;border:1px solid #f2f3f5;"></div>
<div class="b" style="left:788.8px;top:534.8px;width:55.8px;height:15.2px;background:#ffffff;border:1px solid #f3f4f5;"></div>
<div class="t" style="left:790.8px;top:538.7px;font-size:10.4px;color:#444;">CR</div>
<div class="b" style="left:844.6px;top:534.8px;width:15.4px;height:15.2px;background:#e9ebee;border:1px solid #f2f3f5;"></div>
<div class="b" style="left:865.5px;top:534.8px;width:56.1px;height:15.2px;background:#ffffff;border:1px solid #f3f4f5;"></div>
<div class="t" style="right:352.4px;top:538.7px;font-size:10.4px;color:#444;">1.00</div>
<div class="b" style="left:928.4px;top:534.8px;width:56.4px;height:15.2px;background:#eceef0;border:1px solid #f1f2f4;"></div>
<div class="t" style="right:289.6px;top:538.7px;font-size:10.4px;color:#444;">0.00</div>
<div class="b" style="left:1005.8px;top:534.8px;width:55.5px;height:15.2px;background:#eceef0;border:1px solid #f1f2f4;"></div>
<div class="t" style="right:213.0px;top:538.7px;font-size:10.4px;color:#444;">0.00</div>
<div class="b" style="left:1083.0px;top:534.8px;width:55.7px;height:15.2px;background:#eceef0;border:1px solid #f1f2f4;"></div>
<div class="t" style="right:135.6px;top:538.7px;font-size:10.4px;color:#444;">0.00</div>
<div class="b" style="left:1159.7px;top:534.8px;width:67.1px;height:15.2px;background:#ffffff;border:1px solid #f3f4f5;"></div>
<svg class="b" style="left:0px;top:532px;" width="1272" height="20" viewBox="0 0 1272 20"><path d="M19.3 5.0 L24.6 9.5 L19.3 14.0 Z" fill="none" stroke="#9aa0a8" stroke-width="1"/><g fill="none" stroke="#a8aeb4" stroke-width="1"><circle cx="82.5" cy="7.6000000000000005" r="2.6"/><path d="M80.6 9.5 L78.1 12.0"/></g><g fill="none" stroke="#979da6" stroke-width="1.3"><path d="M175 5.5 L179 9.5 L175 13.5 M179 5.5 L183 9.5 L179 13.5"/></g><g fill="none" stroke="#b3b8bf" stroke-width="0.8"><rect x="212.5" y="3.5" width="12" height="11" fill="#eef0f3"/><path d="M212.5 8.5 H224.5 M212.5 11.5 H224.5 M216.5 5.5 V14.5 M220.5 5.5 V14.5"/><rect x="212.5" y="3.5" width="12" height="2.5" fill="#9ba1a9"/></g><g fill="none" stroke="#a8aeb4" stroke-width="1"><circle cx="573.5" cy="7.6000000000000005" r="2.6"/><path d="M571.5999999999999 9.5 L569.0999999999999 12.0"/></g><g fill="none" stroke="#a8aeb4" stroke-width="1"><circle cx="776.2" cy="7.6000000000000005" r="2.6"/><path d="M774.3 9.5 L771.8 12.0"/></g><g fill="none" stroke="#a8aeb4" stroke-width="1"><circle cx="853.7" cy="7.6000000000000005" r="2.6"/><path d="M851.8 9.5 L849.3 12.0"/></g><g fill="none" stroke="#a9aeb4" stroke-width="1" stroke-linejoin="round"><path d="M1232.8000000000002 5.700000000000001 H1244.0"/><path d="M1236.1000000000001 5.700000000000001 A2.3 2.3 0 0 1 1240.7 5.700000000000001"/><path d="M1233.8000000000002 6.9 L1234.8000000000002 15.3 H1242.0 L1243.0 6.9"/><path d="M1237.2 8.700000000000001 V13.100000000000001 M1239.6000000000001 8.700000000000001 V13.100000000000001"/></g></svg>
<div class="b" style="left:11.0px;top:575.1px;width:1236.0px;height:2.7px;background:#e0e3e7;"></div>
<div class="b" style="left:34.8px;top:557.5px;width:38.7px;height:15.2px;background:#ffffff;border:1px solid #f3f4f5;"></div>
<div class="t" style="left:37.4px;top:561.4px;font-size:10.4px;color:#444;">60</div>
<div class="b" style="left:73.5px;top:557.5px;width:14.8px;height:15.2px;background:#e9ebee;border:1px solid #f2f3f5;"></div>
<div class="b" style="left:133.0px;top:557.5px;width:38.0px;height:15.2px;background:#ffffff;border:1px solid #f3f4f5;"></div>
<div class="t" style="left:134.8px;top:561.4px;font-size:10.4px;color:#444;">10</div>
<div class="b" style="left:171.0px;top:557.5px;width:15.0px;height:15.2px;background:#e9ebee;border:1px solid #f2f3f5;"></div>
<div class="b" style="left:237.3px;top:557.5px;width:208.0px;height:15.2px;background:#ffffff;border:1px solid #f3f4f5;"></div>
<div class="t" style="left:239.0px;top:561.4px;font-size:10.4px;color:#444;letter-spacing:0.12px;">Remove Valve</div>
<div class="b" style="left:458.5px;top:557.5px;width:55.7px;height:15.2px;background:#ffffff;border:1px solid #f3f4f5;"></div>
<div class="t" style="right:759.8px;top:561.4px;font-size:10.4px;color:#444;">0.00</div>
<div class="b" style="left:520.6px;top:557.5px;width:43.9px;height:15.2px;background:#ffffff;border:1px solid #f3f4f5;"></div>
<div class="t" style="left:523.0px;top:561.4px;font-size:10.4px;color:#444;">H</div>
<div class="b" style="left:564.5px;top:557.5px;width:15.0px;height:15.2px;background:#e9ebee;border:1px solid #f2f3f5;"></div>
<div class="b" style="left:585.9px;top:557.5px;width:55.7px;height:15.2px;background:#ffffff;border:1px solid #f3f4f5;"></div>
<div class="t" style="right:632.4px;top:561.4px;font-size:10.4px;color:#444;">1.00</div>
<div class="b" style="left:648.7px;top:557.5px;width:56.0px;height:15.2px;background:#ffffff;border:1px solid #f3f4f5;"></div>
<div class="b" style="left:711.5px;top:557.5px;width:55.5px;height:15.2px;background:#ffffff;border:1px solid #f3f4f5;"></div>
<div class="t" style="left:713.5px;top:561.4px;font-size:10.4px;color:#444;">SM-13</div>
<div class="b" style="left:767.0px;top:557.5px;width:15.3px;height:15.2px;background:#e9ebee;border:1px solid #f2f3f5;"></div>
<div class="b" style="left:788.8px;top:557.5px;width:55.8px;height:15.2px;background:#ffffff;border:1px solid #f3f4f5;"></div>
<div class="t" style="left:790.8px;top:561.4px;font-size:10.4px;color:#444;">SM</div>
<div class="b" style="left:844.6px;top:557.5px;width:15.4px;height:15.2px;background:#e9ebee;border:1px solid #f2f3f5;"></div>
<div class="b" style="left:865.5px;top:557.5px;width:56.1px;height:15.2px;background:#ffffff;border:1px solid #f3f4f5;"></div>
<div class="t" style="right:352.4px;top:561.4px;font-size:10.4px;color:#444;">1.00</div>
<div class="b" style="left:928.4px;top:557.5px;width:56.4px;height:15.2px;background:#eceef0;border:1px solid #f1f2f4;"></div>
<div class="t" style="right:289.6px;top:561.4px;font-size:10.4px;color:#444;">0.00</div>
<div class="b" style="left:1005.8px;top:557.5px;width:55.5px;height:15.2px;background:#eceef0;border:1px solid #f1f2f4;"></div>
<div class="t" style="right:213.0px;top:561.4px;font-size:10.4px;color:#444;">0.00</div>
<div class="b" style="left:1083.0px;top:557.5px;width:55.7px;height:15.2px;background:#eceef0;border:1px solid #f1f2f4;"></div>
<div class="t" style="right:135.6px;top:561.4px;font-size:10.4px;color:#444;">0.00</div>
<div class="b" style="left:1159.7px;top:557.5px;width:67.1px;height:15.2px;background:#ffffff;border:1px solid #f3f4f5;"></div>
<svg class="b" style="left:0px;top:555px;" width="1272" height="20" viewBox="0 0 1272 20"><path d="M19.3 5.0 L24.6 9.5 L19.3 14.0 Z" fill="none" stroke="#9aa0a8" stroke-width="1"/><g fill="none" stroke="#a8aeb4" stroke-width="1"><circle cx="82.5" cy="7.6000000000000005" r="2.6"/><path d="M80.6 9.5 L78.1 12.0"/></g><g fill="none" stroke="#979da6" stroke-width="1.3"><path d="M175 5.5 L179 9.5 L175 13.5 M179 5.5 L183 9.5 L179 13.5"/></g><g fill="none" stroke="#b3b8bf" stroke-width="0.8"><rect x="212.5" y="3.5" width="12" height="11" fill="#eef0f3"/><path d="M212.5 8.5 H224.5 M212.5 11.5 H224.5 M216.5 5.5 V14.5 M220.5 5.5 V14.5"/><rect x="212.5" y="3.5" width="12" height="2.5" fill="#9ba1a9"/></g><g fill="none" stroke="#a8aeb4" stroke-width="1"><circle cx="573.5" cy="7.6000000000000005" r="2.6"/><path d="M571.5999999999999 9.5 L569.0999999999999 12.0"/></g><g fill="none" stroke="#a8aeb4" stroke-width="1"><circle cx="776.2" cy="7.6000000000000005" r="2.6"/><path d="M774.3 9.5 L771.8 12.0"/></g><g fill="none" stroke="#a8aeb4" stroke-width="1"><circle cx="853.7" cy="7.6000000000000005" r="2.6"/><path d="M851.8 9.5 L849.3 12.0"/></g><g fill="none" stroke="#a9aeb4" stroke-width="1" stroke-linejoin="round"><path d="M1232.8000000000002 5.700000000000001 H1244.0"/><path d="M1236.1000000000001 5.700000000000001 A2.3 2.3 0 0 1 1240.7 5.700000000000001"/><path d="M1233.8000000000002 6.9 L1234.8000000000002 15.3 H1242.0 L1243.0 6.9"/><path d="M1237.2 8.700000000000001 V13.100000000000001 M1239.6000000000001 8.700000000000001 V13.100000000000001"/></g></svg>
<div class="b" style="left:11.0px;top:597.9px;width:1236.0px;height:2.7px;background:#e0e3e7;"></div>
<div class="b" style="left:34.8px;top:580.3px;width:38.7px;height:15.2px;background:#ffffff;border:1px solid #f3f4f5;"></div>
<div class="t" style="left:37.4px;top:584.2px;font-size:10.4px;color:#444;">70</div>
<div class="b" style="left:73.5px;top:580.3px;width:14.8px;height:15.2px;background:#e9ebee;border:1px solid #f2f3f5;"></div>
<div class="b" style="left:133.0px;top:580.3px;width:38.0px;height:15.2px;background:#ffffff;border:1px solid #f3f4f5;"></div>
<div class="t" style="left:134.8px;top:584.2px;font-size:10.4px;color:#444;">10</div>
<div class="b" style="left:171.0px;top:580.3px;width:15.0px;height:15.2px;background:#e9ebee;border:1px solid #f2f3f5;"></div>
<div class="b" style="left:237.3px;top:580.3px;width:208.0px;height:15.2px;background:#ffffff;border:1px solid #f3f4f5;"></div>
<div class="t" style="left:239.0px;top:584.2px;font-size:10.4px;color:#444;letter-spacing:0.12px;">Install Blind Flanges</div>
<div class="b" style="left:458.5px;top:580.3px;width:55.7px;height:15.2px;background:#ffffff;border:1px solid #f3f4f5;"></div>
<div class="t" style="right:759.8px;top:584.2px;font-size:10.4px;color:#444;">0.00</div>
<div class="b" style="left:520.6px;top:580.3px;width:43.9px;height:15.2px;background:#ffffff;border:1px solid #f3f4f5;"></div>
<div class="t" style="left:523.0px;top:584.2px;font-size:10.4px;color:#444;">H</div>
<div class="b" style="left:564.5px;top:580.3px;width:15.0px;height:15.2px;background:#e9ebee;border:1px solid #f2f3f5;"></div>
<div class="b" style="left:585.9px;top:580.3px;width:55.7px;height:15.2px;background:#ffffff;border:1px solid #f3f4f5;"></div>
<div class="t" style="right:632.4px;top:584.2px;font-size:10.4px;color:#444;">1.00</div>
<div class="b" style="left:648.7px;top:580.3px;width:56.0px;height:15.2px;background:#ffffff;border:1px solid #f3f4f5;"></div>
<div class="b" style="left:711.5px;top:580.3px;width:55.5px;height:15.2px;background:#ffffff;border:1px solid #f3f4f5;"></div>
<div class="t" style="left:713.5px;top:584.2px;font-size:10.4px;color:#444;">SM-13</div>
<div class="b" style="left:767.0px;top:580.3px;width:15.3px;height:15.2px;background:#e9ebee;border:1px solid #f2f3f5;"></div>
<div class="b" style="left:788.8px;top:580.3px;width:55.8px;height:15.2px;background:#ffffff;border:1px solid #f3f4f5;"></div>
<div class="t" style="left:790.8px;top:584.2px;font-size:10.4px;color:#444;">SM</div>
<div class="b" style="left:844.6px;top:580.3px;width:15.4px;height:15.2px;background:#e9ebee;border:1px solid #f2f3f5;"></div>
<div class="b" style="left:865.5px;top:580.3px;width:56.1px;height:15.2px;background:#ffffff;border:1px solid #f3f4f5;"></div>
<div class="t" style="right:352.4px;top:584.2px;font-size:10.4px;color:#444;">1.00</div>
<div class="b" style="left:928.4px;top:580.3px;width:56.4px;height:15.2px;background:#eceef0;border:1px solid #f1f2f4;"></div>
<div class="t" style="right:289.6px;top:584.2px;font-size:10.4px;color:#444;">0.00</div>
<div class="b" style="left:1005.8px;top:580.3px;width:55.5px;height:15.2px;background:#eceef0;border:1px solid #f1f2f4;"></div>
<div class="t" style="right:213.0px;top:584.2px;font-size:10.4px;color:#444;">0.00</div>
<div class="b" style="left:1083.0px;top:580.3px;width:55.7px;height:15.2px;background:#eceef0;border:1px solid #f1f2f4;"></div>
<div class="t" style="right:135.6px;top:584.2px;font-size:10.4px;color:#444;">0.00</div>
<div class="b" style="left:1159.7px;top:580.3px;width:67.1px;height:15.2px;background:#ffffff;border:1px solid #f3f4f5;"></div>
<svg class="b" style="left:0px;top:578px;" width="1272" height="20" viewBox="0 0 1272 20"><path d="M19.3 5.0 L24.6 9.5 L19.3 14.0 Z" fill="none" stroke="#9aa0a8" stroke-width="1"/><g fill="none" stroke="#a8aeb4" stroke-width="1"><circle cx="82.5" cy="7.6000000000000005" r="2.6"/><path d="M80.6 9.5 L78.1 12.0"/></g><g fill="none" stroke="#979da6" stroke-width="1.3"><path d="M175 5.5 L179 9.5 L175 13.5 M179 5.5 L183 9.5 L179 13.5"/></g><g fill="none" stroke="#b3b8bf" stroke-width="0.8"><rect x="212.5" y="3.5" width="12" height="11" fill="#eef0f3"/><path d="M212.5 8.5 H224.5 M212.5 11.5 H224.5 M216.5 5.5 V14.5 M220.5 5.5 V14.5"/><rect x="212.5" y="3.5" width="12" height="2.5" fill="#9ba1a9"/></g><g fill="none" stroke="#a8aeb4" stroke-width="1"><circle cx="573.5" cy="7.6000000000000005" r="2.6"/><path d="M571.5999999999999 9.5 L569.0999999999999 12.0"/></g><g fill="none" stroke="#a8aeb4" stroke-width="1"><circle cx="776.2" cy="7.6000000000000005" r="2.6"/><path d="M774.3 9.5 L771.8 12.0"/></g><g fill="none" stroke="#a8aeb4" stroke-width="1"><circle cx="853.7" cy="7.6000000000000005" r="2.6"/><path d="M851.8 9.5 L849.3 12.0"/></g><g fill="none" stroke="#a9aeb4" stroke-width="1" stroke-linejoin="round"><path d="M1232.8000000000002 5.700000000000001 H1244.0"/><path d="M1236.1000000000001 5.700000000000001 A2.3 2.3 0 0 1 1240.7 5.700000000000001"/><path d="M1233.8000000000002 6.9 L1234.8000000000002 15.3 H1242.0 L1243.0 6.9"/><path d="M1237.2 8.700000000000001 V13.100000000000001 M1239.6000000000001 8.700000000000001 V13.100000000000001"/></g></svg>
<div class="b" style="left:11.0px;top:620.6px;width:1236.0px;height:2.7px;background:#e0e3e7;"></div>
<div class="b" style="left:34.8px;top:603.0px;width:38.7px;height:15.2px;background:#ffffff;border:1px solid #f3f4f5;"></div>
<div class="t" style="left:37.4px;top:606.9px;font-size:10.4px;color:#444;">80</div>
<div class="b" style="left:73.5px;top:603.0px;width:14.8px;height:15.2px;background:#e9ebee;border:1px solid #f2f3f5;"></div>
<div class="b" style="left:133.0px;top:603.0px;width:38.0px;height:15.2px;background:#ffffff;border:1px solid #f3f4f5;"></div>
<div class="t" style="left:134.8px;top:606.9px;font-size:10.4px;color:#444;">10</div>
<div class="b" style="left:171.0px;top:603.0px;width:15.0px;height:15.2px;background:#e9ebee;border:1px solid #f2f3f5;"></div>
<div class="b" style="left:237.3px;top:603.0px;width:208.0px;height:15.2px;background:#ffffff;border:1px solid #f3f4f5;"></div>
<div class="t" style="left:239.0px;top:606.9px;font-size:10.4px;color:#444;letter-spacing:0.12px;">Remove Blind Flanges</div>
<div class="b" style="left:458.5px;top:603.0px;width:55.7px;height:15.2px;background:#ffffff;border:1px solid #f3f4f5;"></div>
<div class="t" style="right:759.8px;top:606.9px;font-size:10.4px;color:#444;">0.00</div>
<div class="b" style="left:520.6px;top:603.0px;width:43.9px;height:15.2px;background:#ffffff;border:1px solid #f3f4f5;"></div>
<div class="t" style="left:523.0px;top:606.9px;font-size:10.4px;color:#444;">H</div>
<div class="b" style="left:564.5px;top:603.0px;width:15.0px;height:15.2px;background:#e9ebee;border:1px solid #f2f3f5;"></div>
<div class="b" style="left:585.9px;top:603.0px;width:55.7px;height:15.2px;background:#ffffff;border:1px solid #f3f4f5;"></div>
<div class="t" style="right:632.4px;top:606.9px;font-size:10.4px;color:#444;">1.00</div>
<div class="b" style="left:648.7px;top:603.0px;width:56.0px;height:15.2px;background:#ffffff;border:1px solid #f3f4f5;"></div>
<div class="b" style="left:711.5px;top:603.0px;width:55.5px;height:15.2px;background:#ffffff;border:1px solid #f3f4f5;"></div>
<div class="t" style="left:713.5px;top:606.9px;font-size:10.4px;color:#444;">SM-13</div>
<div class="b" style="left:767.0px;top:603.0px;width:15.3px;height:15.2px;background:#e9ebee;border:1px solid #f2f3f5;"></div>
<div class="b" style="left:788.8px;top:603.0px;width:55.8px;height:15.2px;background:#ffffff;border:1px solid #f3f4f5;"></div>
<div class="t" style="left:790.8px;top:606.9px;font-size:10.4px;color:#444;">SM</div>
<div class="b" style="left:844.6px;top:603.0px;width:15.4px;height:15.2px;background:#e9ebee;border:1px solid #f2f3f5;"></div>
<div class="b" style="left:865.5px;top:603.0px;width:56.1px;height:15.2px;background:#ffffff;border:1px solid #f3f4f5;"></div>
<div class="t" style="right:352.4px;top:606.9px;font-size:10.4px;color:#444;">1.00</div>
<div class="b" style="left:928.4px;top:603.0px;width:56.4px;height:15.2px;background:#eceef0;border:1px solid #f1f2f4;"></div>
<div class="t" style="right:289.6px;top:606.9px;font-size:10.4px;color:#444;">0.00</div>
<div class="b" style="left:1005.8px;top:603.0px;width:55.5px;height:15.2px;background:#eceef0;border:1px solid #f1f2f4;"></div>
<div class="t" style="right:213.0px;top:606.9px;font-size:10.4px;color:#444;">0.00</div>
<div class="b" style="left:1083.0px;top:603.0px;width:55.7px;height:15.2px;background:#eceef0;border:1px solid #f1f2f4;"></div>
<div class="t" style="right:135.6px;top:606.9px;font-size:10.4px;color:#444;">0.00</div>
<div class="b" style="left:1159.7px;top:603.0px;width:67.1px;height:15.2px;background:#ffffff;border:1px solid #f3f4f5;"></div>
<svg class="b" style="left:0px;top:601px;" width="1272" height="20" viewBox="0 0 1272 20"><path d="M19.3 5.0 L24.6 9.5 L19.3 14.0 Z" fill="none" stroke="#9aa0a8" stroke-width="1"/><g fill="none" stroke="#a8aeb4" stroke-width="1"><circle cx="82.5" cy="7.6000000000000005" r="2.6"/><path d="M80.6 9.5 L78.1 12.0"/></g><g fill="none" stroke="#979da6" stroke-width="1.3"><path d="M175 5.5 L179 9.5 L175 13.5 M179 5.5 L183 9.5 L179 13.5"/></g><g fill="none" stroke="#b3b8bf" stroke-width="0.8"><rect x="212.5" y="3.5" width="12" height="11" fill="#eef0f3"/><path d="M212.5 8.5 H224.5 M212.5 11.5 H224.5 M216.5 5.5 V14.5 M220.5 5.5 V14.5"/><rect x="212.5" y="3.5" width="12" height="2.5" fill="#9ba1a9"/></g><g fill="none" stroke="#a8aeb4" stroke-width="1"><circle cx="573.5" cy="7.6000000000000005" r="2.6"/><path d="M571.5999999999999 9.5 L569.0999999999999 12.0"/></g><g fill="none" stroke="#a8aeb4" stroke-width="1"><circle cx="776.2" cy="7.6000000000000005" r="2.6"/><path d="M774.3 9.5 L771.8 12.0"/></g><g fill="none" stroke="#a8aeb4" stroke-width="1"><circle cx="853.7" cy="7.6000000000000005" r="2.6"/><path d="M851.8 9.5 L849.3 12.0"/></g><g fill="none" stroke="#a9aeb4" stroke-width="1" stroke-linejoin="round"><path d="M1232.8000000000002 5.700000000000001 H1244.0"/><path d="M1236.1000000000001 5.700000000000001 A2.3 2.3 0 0 1 1240.7 5.700000000000001"/><path d="M1233.8000000000002 6.9 L1234.8000000000002 15.3 H1242.0 L1243.0 6.9"/><path d="M1237.2 8.700000000000001 V13.100000000000001 M1239.6000000000001 8.700000000000001 V13.100000000000001"/></g></svg>
<div class="b" style="left:11.0px;top:643.4px;width:1236.0px;height:2.7px;background:#e0e3e7;"></div>
<div class="b" style="left:34.8px;top:625.8px;width:38.7px;height:15.2px;background:#ffffff;border:1px solid #f3f4f5;"></div>
<div class="t" style="left:37.4px;top:629.7px;font-size:10.4px;color:#444;">90</div>
<div class="b" style="left:73.5px;top:625.8px;width:14.8px;height:15.2px;background:#e9ebee;border:1px solid #f2f3f5;"></div>
<div class="b" style="left:133.0px;top:625.8px;width:38.0px;height:15.2px;background:#ffffff;border:1px solid #f3f4f5;"></div>
<div class="t" style="left:134.8px;top:629.7px;font-size:10.4px;color:#444;">10</div>
<div class="b" style="left:171.0px;top:625.8px;width:15.0px;height:15.2px;background:#e9ebee;border:1px solid #f2f3f5;"></div>
<div class="b" style="left:237.3px;top:625.8px;width:208.0px;height:15.2px;background:#ffffff;border:1px solid #f3f4f5;"></div>
<div class="t" style="left:239.0px;top:629.7px;font-size:10.4px;color:#444;letter-spacing:0.12px;">Install Valve</div>
<div class="b" style="left:458.5px;top:625.8px;width:55.7px;height:15.2px;background:#ffffff;border:1px solid #f3f4f5;"></div>
<div class="t" style="right:759.8px;top:629.7px;font-size:10.4px;color:#444;">0.00</div>
<div class="b" style="left:520.6px;top:625.8px;width:43.9px;height:15.2px;background:#ffffff;border:1px solid #f3f4f5;"></div>
<div class="t" style="left:523.0px;top:629.7px;font-size:10.4px;color:#444;">H</div>
<div class="b" style="left:564.5px;top:625.8px;width:15.0px;height:15.2px;background:#e9ebee;border:1px solid #f2f3f5;"></div>
<div class="b" style="left:585.9px;top:625.8px;width:55.7px;height:15.2px;background:#ffffff;border:1px solid #f3f4f5;"></div>
<div class="t" style="right:632.4px;top:629.7px;font-size:10.4px;color:#444;">1.00</div>
<div class="b" style="left:648.7px;top:625.8px;width:56.0px;height:15.2px;background:#ffffff;border:1px solid #f3f4f5;"></div>
<div class="b" style="left:711.5px;top:625.8px;width:55.5px;height:15.2px;background:#ffffff;border:1px solid #f3f4f5;"></div>
<div class="t" style="left:713.5px;top:629.7px;font-size:10.4px;color:#444;">SM-13</div>
<div class="b" style="left:767.0px;top:625.8px;width:15.3px;height:15.2px;background:#e9ebee;border:1px solid #f2f3f5;"></div>
<div class="b" style="left:788.8px;top:625.8px;width:55.8px;height:15.2px;background:#ffffff;border:1px solid #f3f4f5;"></div>
<div class="t" style="left:790.8px;top:629.7px;font-size:10.4px;color:#444;">SM</div>
<div class="b" style="left:844.6px;top:625.8px;width:15.4px;height:15.2px;background:#e9ebee;border:1px solid #f2f3f5;"></div>
<div class="b" style="left:865.5px;top:625.8px;width:56.1px;height:15.2px;background:#ffffff;border:1px solid #f3f4f5;"></div>
<div class="t" style="right:352.4px;top:629.7px;font-size:10.4px;color:#444;">1.00</div>
<div class="b" style="left:928.4px;top:625.8px;width:56.4px;height:15.2px;background:#eceef0;border:1px solid #f1f2f4;"></div>
<div class="t" style="right:289.6px;top:629.7px;font-size:10.4px;color:#444;">0.00</div>
<div class="b" style="left:1005.8px;top:625.8px;width:55.5px;height:15.2px;background:#eceef0;border:1px solid #f1f2f4;"></div>
<div class="t" style="right:213.0px;top:629.7px;font-size:10.4px;color:#444;">0.00</div>
<div class="b" style="left:1083.0px;top:625.8px;width:55.7px;height:15.2px;background:#eceef0;border:1px solid #f1f2f4;"></div>
<div class="t" style="right:135.6px;top:629.7px;font-size:10.4px;color:#444;">0.00</div>
<div class="b" style="left:1159.7px;top:625.8px;width:67.1px;height:15.2px;background:#ffffff;border:1px solid #f3f4f5;"></div>
<svg class="b" style="left:0px;top:623px;" width="1272" height="20" viewBox="0 0 1272 20"><path d="M19.3 5.0 L24.6 9.5 L19.3 14.0 Z" fill="none" stroke="#9aa0a8" stroke-width="1"/><g fill="none" stroke="#a8aeb4" stroke-width="1"><circle cx="82.5" cy="7.6000000000000005" r="2.6"/><path d="M80.6 9.5 L78.1 12.0"/></g><g fill="none" stroke="#979da6" stroke-width="1.3"><path d="M175 5.5 L179 9.5 L175 13.5 M179 5.5 L183 9.5 L179 13.5"/></g><g fill="none" stroke="#b3b8bf" stroke-width="0.8"><rect x="212.5" y="3.5" width="12" height="11" fill="#eef0f3"/><path d="M212.5 8.5 H224.5 M212.5 11.5 H224.5 M216.5 5.5 V14.5 M220.5 5.5 V14.5"/><rect x="212.5" y="3.5" width="12" height="2.5" fill="#9ba1a9"/></g><g fill="none" stroke="#a8aeb4" stroke-width="1"><circle cx="573.5" cy="7.6000000000000005" r="2.6"/><path d="M571.5999999999999 9.5 L569.0999999999999 12.0"/></g><g fill="none" stroke="#a8aeb4" stroke-width="1"><circle cx="776.2" cy="7.6000000000000005" r="2.6"/><path d="M774.3 9.5 L771.8 12.0"/></g><g fill="none" stroke="#a8aeb4" stroke-width="1"><circle cx="853.7" cy="7.6000000000000005" r="2.6"/><path d="M851.8 9.5 L849.3 12.0"/></g><g fill="none" stroke="#a9aeb4" stroke-width="1" stroke-linejoin="round"><path d="M1232.8000000000002 5.700000000000001 H1244.0"/><path d="M1236.1000000000001 5.700000000000001 A2.3 2.3 0 0 1 1240.7 5.700000000000001"/><path d="M1233.8000000000002 6.9 L1234.8000000000002 15.3 H1242.0 L1243.0 6.9"/><path d="M1237.2 8.700000000000001 V13.100000000000001 M1239.6000000000001 8.700000000000001 V13.100000000000001"/></g></svg>
<div class="b" style="left:11.0px;top:666.1px;width:1236.0px;height:2.7px;background:#e0e3e7;"></div>
<div class="b" style="left:34.8px;top:648.5px;width:38.7px;height:15.2px;background:#ffffff;border:1px solid #f3f4f5;"></div>
<div class="t" style="left:37.4px;top:652.4px;font-size:10.4px;color:#444;">100</div>
<div class="b" style="left:73.5px;top:648.5px;width:14.8px;height:15.2px;background:#e9ebee;border:1px solid #f2f3f5;"></div>
<div class="b" style="left:133.0px;top:648.5px;width:38.0px;height:15.2px;background:#ffffff;border:1px solid #f3f4f5;"></div>
<div class="t" style="left:134.8px;top:652.4px;font-size:10.4px;color:#444;">10</div>
<div class="b" style="left:171.0px;top:648.5px;width:15.0px;height:15.2px;background:#e9ebee;border:1px solid #f2f3f5;"></div>
<div class="b" style="left:237.3px;top:648.5px;width:208.0px;height:15.2px;background:#ffffff;border:1px solid #f3f4f5;"></div>
<div class="t" style="left:239.0px;top:652.4px;font-size:10.4px;color:#444;letter-spacing:0.12px;">Dismantle Lifting Frame</div>
<div class="b" style="left:458.5px;top:648.5px;width:55.7px;height:15.2px;background:#ffffff;border:1px solid #f3f4f5;"></div>
<div class="t" style="right:759.8px;top:652.4px;font-size:10.4px;color:#444;">0.00</div>
<div class="b" style="left:520.6px;top:648.5px;width:43.9px;height:15.2px;background:#ffffff;border:1px solid #f3f4f5;"></div>
<div class="t" style="left:523.0px;top:652.4px;font-size:10.4px;color:#444;">H</div>
<div class="b" style="left:564.5px;top:648.5px;width:15.0px;height:15.2px;background:#e9ebee;border:1px solid #f2f3f5;"></div>
<div class="b" style="left:585.9px;top:648.5px;width:55.7px;height:15.2px;background:#ffffff;border:1px solid #f3f4f5;"></div>
<div class="t" style="right:632.4px;top:652.4px;font-size:10.4px;color:#444;">1.00</div>
<div class="b" style="left:648.7px;top:648.5px;width:56.0px;height:15.2px;background:#ffffff;border:1px solid #f3f4f5;"></div>
<div class="b" style="left:711.5px;top:648.5px;width:55.5px;height:15.2px;background:#ffffff;border:1px solid #f3f4f5;"></div>
<div class="t" style="left:713.5px;top:652.4px;font-size:10.4px;color:#444;">CR-02</div>
<div class="b" style="left:767.0px;top:648.5px;width:15.3px;height:15.2px;background:#e9ebee;border:1px solid #f2f3f5;"></div>
<div class="b" style="left:788.8px;top:648.5px;width:55.8px;height:15.2px;background:#ffffff;border:1px solid #f3f4f5;"></div>
<div class="t" style="left:790.8px;top:652.4px;font-size:10.4px;color:#444;">CR</div>
<div class="b" style="left:844.6px;top:648.5px;width:15.4px;height:15.2px;background:#e9ebee;border:1px solid #f2f3f5;"></div>
<div class="b" style="left:865.5px;top:648.5px;width:56.1px;height:15.2px;background:#ffffff;border:1px solid #f3f4f5;"></div>
<div class="t" style="right:352.4px;top:652.4px;font-size:10.4px;color:#444;">1.00</div>
<div class="b" style="left:928.4px;top:648.5px;width:56.4px;height:15.2px;background:#eceef0;border:1px solid #f1f2f4;"></div>
<div class="t" style="right:289.6px;top:652.4px;font-size:10.4px;color:#444;">0.00</div>
<div class="b" style="left:1005.8px;top:648.5px;width:55.5px;height:15.2px;background:#eceef0;border:1px solid #f1f2f4;"></div>
<div class="t" style="right:213.0px;top:652.4px;font-size:10.4px;color:#444;">0.00</div>
<div class="b" style="left:1083.0px;top:648.5px;width:55.7px;height:15.2px;background:#eceef0;border:1px solid #f1f2f4;"></div>
<div class="t" style="right:135.6px;top:652.4px;font-size:10.4px;color:#444;">0.00</div>
<div class="b" style="left:1159.7px;top:648.5px;width:67.1px;height:15.2px;background:#ffffff;border:1px solid #f3f4f5;"></div>
<svg class="b" style="left:0px;top:646px;" width="1272" height="20" viewBox="0 0 1272 20"><path d="M19.3 5.0 L24.6 9.5 L19.3 14.0 Z" fill="none" stroke="#9aa0a8" stroke-width="1"/><g fill="none" stroke="#a8aeb4" stroke-width="1"><circle cx="82.5" cy="7.6000000000000005" r="2.6"/><path d="M80.6 9.5 L78.1 12.0"/></g><g fill="none" stroke="#979da6" stroke-width="1.3"><path d="M175 5.5 L179 9.5 L175 13.5 M179 5.5 L183 9.5 L179 13.5"/></g><g fill="none" stroke="#b3b8bf" stroke-width="0.8"><rect x="212.5" y="3.5" width="12" height="11" fill="#eef0f3"/><path d="M212.5 8.5 H224.5 M212.5 11.5 H224.5 M216.5 5.5 V14.5 M220.5 5.5 V14.5"/><rect x="212.5" y="3.5" width="12" height="2.5" fill="#9ba1a9"/></g><g fill="none" stroke="#a8aeb4" stroke-width="1"><circle cx="573.5" cy="7.6000000000000005" r="2.6"/><path d="M571.5999999999999 9.5 L569.0999999999999 12.0"/></g><g fill="none" stroke="#a8aeb4" stroke-width="1"><circle cx="776.2" cy="7.6000000000000005" r="2.6"/><path d="M774.3 9.5 L771.8 12.0"/></g><g fill="none" stroke="#a8aeb4" stroke-width="1"><circle cx="853.7" cy="7.6000000000000005" r="2.6"/><path d="M851.8 9.5 L849.3 12.0"/></g><g fill="none" stroke="#a9aeb4" stroke-width="1" stroke-linejoin="round"><path d="M1232.8000000000002 5.700000000000001 H1244.0"/><path d="M1236.1000000000001 5.700000000000001 A2.3 2.3 0 0 1 1240.7 5.700000000000001"/><path d="M1233.8000000000002 6.9 L1234.8000000000002 15.3 H1242.0 L1243.0 6.9"/><path d="M1237.2 8.700000000000001 V13.100000000000001 M1239.6000000000001 8.700000000000001 V13.100000000000001"/></g></svg>
<div class="b" style="left:11.0px;top:688.9px;width:1236.0px;height:2.7px;background:#e0e3e7;"></div>
<div class="b" style="left:34.8px;top:671.3px;width:38.7px;height:15.2px;background:#ffffff;border:1px solid #f3f4f5;"></div>
<div class="t" style="left:37.4px;top:675.2px;font-size:10.4px;color:#444;">110</div>
<div class="b" style="left:73.5px;top:671.3px;width:14.8px;height:15.2px;background:#e9ebee;border:1px solid #f2f3f5;"></div>
<div class="b" style="left:133.0px;top:671.3px;width:38.0px;height:15.2px;background:#ffffff;border:1px solid #f3f4f5;"></div>
<div class="t" style="left:134.8px;top:675.2px;font-size:10.4px;color:#444;">10</div>
<div class="b" style="left:171.0px;top:671.3px;width:15.0px;height:15.2px;background:#e9ebee;border:1px solid #f2f3f5;"></div>
<div class="b" style="left:237.3px;top:671.3px;width:208.0px;height:15.2px;background:#ffffff;border:1px solid #f3f4f5;"></div>
<div class="t" style="left:239.0px;top:675.2px;font-size:10.4px;color:#444;letter-spacing:0.12px;">Dismantle Workbench</div>
<div class="b" style="left:458.5px;top:671.3px;width:55.7px;height:15.2px;background:#ffffff;border:1px solid #f3f4f5;"></div>
<div class="t" style="right:759.8px;top:675.2px;font-size:10.4px;color:#444;">0.00</div>
<div class="b" style="left:520.6px;top:671.3px;width:43.9px;height:15.2px;background:#ffffff;border:1px solid #f3f4f5;"></div>
<div class="t" style="left:523.0px;top:675.2px;font-size:10.4px;color:#444;">H</div>
<div class="b" style="left:564.5px;top:671.3px;width:15.0px;height:15.2px;background:#e9ebee;border:1px solid #f2f3f5;"></div>
<div class="b" style="left:585.9px;top:671.3px;width:55.7px;height:15.2px;background:#ffffff;border:1px solid #f3f4f5;"></div>
<div class="t" style="right:632.4px;top:675.2px;font-size:10.4px;color:#444;">1.00</div>
<div class="b" style="left:648.7px;top:671.3px;width:56.0px;height:15.2px;background:#ffffff;border:1px solid #f3f4f5;"></div>
<div class="b" style="left:711.5px;top:671.3px;width:55.5px;height:15.2px;background:#ffffff;border:1px solid #f3f4f5;"></div>
<div class="t" style="left:713.5px;top:675.2px;font-size:10.4px;color:#444;">CR-02</div>
<div class="b" style="left:767.0px;top:671.3px;width:15.3px;height:15.2px;background:#e9ebee;border:1px solid #f2f3f5;"></div>
<div class="b" style="left:788.8px;top:671.3px;width:55.8px;height:15.2px;background:#ffffff;border:1px solid #f3f4f5;"></div>
<div class="t" style="left:790.8px;top:675.2px;font-size:10.4px;color:#444;">CR</div>
<div class="b" style="left:844.6px;top:671.3px;width:15.4px;height:15.2px;background:#e9ebee;border:1px solid #f2f3f5;"></div>
<div class="b" style="left:865.5px;top:671.3px;width:56.1px;height:15.2px;background:#ffffff;border:1px solid #f3f4f5;"></div>
<div class="t" style="right:352.4px;top:675.2px;font-size:10.4px;color:#444;">1.00</div>
<div class="b" style="left:928.4px;top:671.3px;width:56.4px;height:15.2px;background:#eceef0;border:1px solid #f1f2f4;"></div>
<div class="t" style="right:289.6px;top:675.2px;font-size:10.4px;color:#444;">0.00</div>
<div class="b" style="left:1005.8px;top:671.3px;width:55.5px;height:15.2px;background:#eceef0;border:1px solid #f1f2f4;"></div>
<div class="t" style="right:213.0px;top:675.2px;font-size:10.4px;color:#444;">0.00</div>
<div class="b" style="left:1083.0px;top:671.3px;width:55.7px;height:15.2px;background:#eceef0;border:1px solid #f1f2f4;"></div>
<div class="t" style="right:135.6px;top:675.2px;font-size:10.4px;color:#444;">0.00</div>
<div class="b" style="left:1159.7px;top:671.3px;width:67.1px;height:15.2px;background:#ffffff;border:1px solid #f3f4f5;"></div>
<svg class="b" style="left:0px;top:669px;" width="1272" height="20" viewBox="0 0 1272 20"><path d="M19.3 5.0 L24.6 9.5 L19.3 14.0 Z" fill="none" stroke="#9aa0a8" stroke-width="1"/><g fill="none" stroke="#a8aeb4" stroke-width="1"><circle cx="82.5" cy="7.6000000000000005" r="2.6"/><path d="M80.6 9.5 L78.1 12.0"/></g><g fill="none" stroke="#979da6" stroke-width="1.3"><path d="M175 5.5 L179 9.5 L175 13.5 M179 5.5 L183 9.5 L179 13.5"/></g><g fill="none" stroke="#b3b8bf" stroke-width="0.8"><rect x="212.5" y="3.5" width="12" height="11" fill="#eef0f3"/><path d="M212.5 8.5 H224.5 M212.5 11.5 H224.5 M216.5 5.5 V14.5 M220.5 5.5 V14.5"/><rect x="212.5" y="3.5" width="12" height="2.5" fill="#9ba1a9"/></g><g fill="none" stroke="#a8aeb4" stroke-width="1"><circle cx="573.5" cy="7.6000000000000005" r="2.6"/><path d="M571.5999999999999 9.5 L569.0999999999999 12.0"/></g><g fill="none" stroke="#a8aeb4" stroke-width="1"><circle cx="776.2" cy="7.6000000000000005" r="2.6"/><path d="M774.3 9.5 L771.8 12.0"/></g><g fill="none" stroke="#a8aeb4" stroke-width="1"><circle cx="853.7" cy="7.6000000000000005" r="2.6"/><path d="M851.8 9.5 L849.3 12.0"/></g><g fill="none" stroke="#a9aeb4" stroke-width="1" stroke-linejoin="round"><path d="M1232.8000000000002 5.700000000000001 H1244.0"/><path d="M1236.1000000000001 5.700000000000001 A2.3 2.3 0 0 1 1240.7 5.700000000000001"/><path d="M1233.8000000000002 6.9 L1234.8000000000002 15.3 H1242.0 L1243.0 6.9"/><path d="M1237.2 8.700000000000001 V13.100000000000001 M1239.6000000000001 8.700000000000001 V13.100000000000001"/></g></svg>
<div class="b" style="left:11.0px;top:711.6px;width:1236.0px;height:2.7px;background:#e0e3e7;"></div>
<div class="b" style="left:34.8px;top:694.0px;width:38.7px;height:15.2px;background:#ffffff;border:1px solid #f3f4f5;"></div>
<div class="t" style="left:37.4px;top:697.9px;font-size:10.4px;color:#444;">120</div>
<div class="b" style="left:73.5px;top:694.0px;width:14.8px;height:15.2px;background:#e9ebee;border:1px solid #f2f3f5;"></div>
<div class="b" style="left:133.0px;top:694.0px;width:38.0px;height:15.2px;background:#ffffff;border:1px solid #f3f4f5;"></div>
<div class="t" style="left:134.8px;top:697.9px;font-size:10.4px;color:#444;">10</div>
<div class="b" style="left:171.0px;top:694.0px;width:15.0px;height:15.2px;background:#e9ebee;border:1px solid #f2f3f5;"></div>
<div class="b" style="left:237.3px;top:694.0px;width:208.0px;height:15.2px;background:#ffffff;border:1px solid #f3f4f5;"></div>
<div class="t" style="left:239.0px;top:697.9px;font-size:10.4px;color:#444;letter-spacing:0.12px;">Calibrate/Test Valve Instruments</div>
<div class="b" style="left:458.5px;top:694.0px;width:55.7px;height:15.2px;background:#ffffff;border:1px solid #f3f4f5;"></div>
<div class="t" style="right:759.8px;top:697.9px;font-size:10.4px;color:#444;">0.00</div>
<div class="b" style="left:520.6px;top:694.0px;width:43.9px;height:15.2px;background:#ffffff;border:1px solid #f3f4f5;"></div>
<div class="t" style="left:523.0px;top:697.9px;font-size:10.4px;color:#444;">H</div>
<div class="b" style="left:564.5px;top:694.0px;width:15.0px;height:15.2px;background:#e9ebee;border:1px solid #f2f3f5;"></div>
<div class="b" style="left:585.9px;top:694.0px;width:55.7px;height:15.2px;background:#ffffff;border:1px solid #f3f4f5;"></div>
<div class="t" style="right:632.4px;top:697.9px;font-size:10.4px;color:#444;">1.00</div>
<div class="b" style="left:648.7px;top:694.0px;width:56.0px;height:15.2px;background:#ffffff;border:1px solid #f3f4f5;"></div>
<div class="b" style="left:711.5px;top:694.0px;width:55.5px;height:15.2px;background:#ffffff;border:1px solid #f3f4f5;"></div>
<div class="t" style="left:713.5px;top:697.9px;font-size:10.4px;color:#444;">EL-05</div>
<div class="b" style="left:767.0px;top:694.0px;width:15.3px;height:15.2px;background:#e9ebee;border:1px solid #f2f3f5;"></div>
<div class="b" style="left:788.8px;top:694.0px;width:55.8px;height:15.2px;background:#ffffff;border:1px solid #f3f4f5;"></div>
<div class="t" style="left:790.8px;top:697.9px;font-size:10.4px;color:#444;">EL</div>
<div class="b" style="left:844.6px;top:694.0px;width:15.4px;height:15.2px;background:#e9ebee;border:1px solid #f2f3f5;"></div>
<div class="b" style="left:865.5px;top:694.0px;width:56.1px;height:15.2px;background:#ffffff;border:1px solid #f3f4f5;"></div>
<div class="t" style="right:352.4px;top:697.9px;font-size:10.4px;color:#444;">1.00</div>
<div class="b" style="left:928.4px;top:694.0px;width:56.4px;height:15.2px;background:#eceef0;border:1px solid #f1f2f4;"></div>
<div class="t" style="right:289.6px;top:697.9px;font-size:10.4px;color:#444;">0.00</div>
<div class="b" style="left:1005.8px;top:694.0px;width:55.5px;height:15.2px;background:#eceef0;border:1px solid #f1f2f4;"></div>
<div class="t" style="right:213.0px;top:697.9px;font-size:10.4px;color:#444;">0.00</div>
<div class="b" style="left:1083.0px;top:694.0px;width:55.7px;height:15.2px;background:#eceef0;border:1px solid #f1f2f4;"></div>
<div class="t" style="right:135.6px;top:697.9px;font-size:10.4px;color:#444;">0.00</div>
<div class="b" style="left:1159.7px;top:694.0px;width:67.1px;height:15.2px;background:#ffffff;border:1px solid #f3f4f5;"></div>
<svg class="b" style="left:0px;top:692px;" width="1272" height="20" viewBox="0 0 1272 20"><path d="M19.3 5.0 L24.6 9.5 L19.3 14.0 Z" fill="none" stroke="#9aa0a8" stroke-width="1"/><g fill="none" stroke="#a8aeb4" stroke-width="1"><circle cx="82.5" cy="7.6000000000000005" r="2.6"/><path d="M80.6 9.5 L78.1 12.0"/></g><g fill="none" stroke="#979da6" stroke-width="1.3"><path d="M175 5.5 L179 9.5 L175 13.5 M179 5.5 L183 9.5 L179 13.5"/></g><g fill="none" stroke="#b3b8bf" stroke-width="0.8"><rect x="212.5" y="3.5" width="12" height="11" fill="#eef0f3"/><path d="M212.5 8.5 H224.5 M212.5 11.5 H224.5 M216.5 5.5 V14.5 M220.5 5.5 V14.5"/><rect x="212.5" y="3.5" width="12" height="2.5" fill="#9ba1a9"/></g><g fill="none" stroke="#a8aeb4" stroke-width="1"><circle cx="573.5" cy="7.6000000000000005" r="2.6"/><path d="M571.5999999999999 9.5 L569.0999999999999 12.0"/></g><g fill="none" stroke="#a8aeb4" stroke-width="1"><circle cx="776.2" cy="7.6000000000000005" r="2.6"/><path d="M774.3 9.5 L771.8 12.0"/></g><g fill="none" stroke="#a8aeb4" stroke-width="1"><circle cx="853.7" cy="7.6000000000000005" r="2.6"/><path d="M851.8 9.5 L849.3 12.0"/></g><g fill="none" stroke="#a9aeb4" stroke-width="1" stroke-linejoin="round"><path d="M1232.8000000000002 5.700000000000001 H1244.0"/><path d="M1236.1000000000001 5.700000000000001 A2.3 2.3 0 0 1 1240.7 5.700000000000001"/><path d="M1233.8000000000002 6.9 L1234.8000000000002 15.3 H1242.0 L1243.0 6.9"/><path d="M1237.2 8.700000000000001 V13.100000000000001 M1239.6000000000001 8.700000000000001 V13.100000000000001"/></g></svg>
<div class="b" style="left:11.0px;top:734.4px;width:1236.0px;height:2.7px;background:#e0e3e7;"></div>
<div class="b" style="left:34.8px;top:716.8px;width:38.7px;height:15.2px;background:#ffffff;border:1px solid #f3f4f5;"></div>
<div class="t" style="left:37.4px;top:720.7px;font-size:10.4px;color:#444;">130</div>
<div class="b" style="left:73.5px;top:716.8px;width:14.8px;height:15.2px;background:#e9ebee;border:1px solid #f2f3f5;"></div>
<div class="b" style="left:133.0px;top:716.8px;width:38.0px;height:15.2px;background:#ffffff;border:1px solid #f3f4f5;"></div>
<div class="t" style="left:134.8px;top:720.7px;font-size:10.4px;color:#444;">10</div>
<div class="b" style="left:171.0px;top:716.8px;width:15.0px;height:15.2px;background:#e9ebee;border:1px solid #f2f3f5;"></div>
<div class="b" style="left:237.3px;top:716.8px;width:208.0px;height:15.2px;background:#ffffff;border:1px solid #f3f4f5;"></div>
<div class="t" style="left:239.0px;top:720.7px;font-size:10.4px;color:#444;letter-spacing:0.12px;">Perform Ex Inspection/Complete I99</div>
<div class="b" style="left:458.5px;top:716.8px;width:55.7px;height:15.2px;background:#ffffff;border:1px solid #f3f4f5;"></div>
<div class="t" style="right:759.8px;top:720.7px;font-size:10.4px;color:#444;">0.00</div>
<div class="b" style="left:520.6px;top:716.8px;width:43.9px;height:15.2px;background:#ffffff;border:1px solid #f3f4f5;"></div>
<div class="t" style="left:523.0px;top:720.7px;font-size:10.4px;color:#444;">H</div>
<div class="b" style="left:564.5px;top:716.8px;width:15.0px;height:15.2px;background:#e9ebee;border:1px solid #f2f3f5;"></div>
<div class="b" style="left:585.9px;top:716.8px;width:55.7px;height:15.2px;background:#ffffff;border:1px solid #f3f4f5;"></div>
<div class="t" style="right:632.4px;top:720.7px;font-size:10.4px;color:#444;">1.00</div>
<div class="b" style="left:648.7px;top:716.8px;width:56.0px;height:15.2px;background:#ffffff;border:1px solid #f3f4f5;"></div>
<div class="b" style="left:711.5px;top:716.8px;width:55.5px;height:15.2px;background:#ffffff;border:1px solid #f3f4f5;"></div>
<div class="t" style="left:713.5px;top:720.7px;font-size:10.4px;color:#444;">EL-05</div>
<div class="b" style="left:767.0px;top:716.8px;width:15.3px;height:15.2px;background:#e9ebee;border:1px solid #f2f3f5;"></div>
<div class="b" style="left:788.8px;top:716.8px;width:55.8px;height:15.2px;background:#ffffff;border:1px solid #f3f4f5;"></div>
<div class="t" style="left:790.8px;top:720.7px;font-size:10.4px;color:#444;">EL</div>
<div class="b" style="left:844.6px;top:716.8px;width:15.4px;height:15.2px;background:#e9ebee;border:1px solid #f2f3f5;"></div>
<div class="b" style="left:865.5px;top:716.8px;width:56.1px;height:15.2px;background:#ffffff;border:1px solid #f3f4f5;"></div>
<div class="t" style="right:352.4px;top:720.7px;font-size:10.4px;color:#444;">1.00</div>
<div class="b" style="left:928.4px;top:716.8px;width:56.4px;height:15.2px;background:#eceef0;border:1px solid #f1f2f4;"></div>
<div class="t" style="right:289.6px;top:720.7px;font-size:10.4px;color:#444;">0.00</div>
<div class="b" style="left:1005.8px;top:716.8px;width:55.5px;height:15.2px;background:#eceef0;border:1px solid #f1f2f4;"></div>
<div class="t" style="right:213.0px;top:720.7px;font-size:10.4px;color:#444;">0.00</div>
<div class="b" style="left:1083.0px;top:716.8px;width:55.7px;height:15.2px;background:#eceef0;border:1px solid #f1f2f4;"></div>
<div class="t" style="right:135.6px;top:720.7px;font-size:10.4px;color:#444;">0.00</div>
<div class="b" style="left:1159.7px;top:716.8px;width:67.1px;height:15.2px;background:#ffffff;border:1px solid #f3f4f5;"></div>
<svg class="b" style="left:0px;top:714px;" width="1272" height="20" viewBox="0 0 1272 20"><path d="M19.3 5.0 L24.6 9.5 L19.3 14.0 Z" fill="none" stroke="#9aa0a8" stroke-width="1"/><g fill="none" stroke="#a8aeb4" stroke-width="1"><circle cx="82.5" cy="7.6000000000000005" r="2.6"/><path d="M80.6 9.5 L78.1 12.0"/></g><g fill="none" stroke="#979da6" stroke-width="1.3"><path d="M175 5.5 L179 9.5 L175 13.5 M179 5.5 L183 9.5 L179 13.5"/></g><g fill="none" stroke="#b3b8bf" stroke-width="0.8"><rect x="212.5" y="3.5" width="12" height="11" fill="#eef0f3"/><path d="M212.5 8.5 H224.5 M212.5 11.5 H224.5 M216.5 5.5 V14.5 M220.5 5.5 V14.5"/><rect x="212.5" y="3.5" width="12" height="2.5" fill="#9ba1a9"/></g><g fill="none" stroke="#a8aeb4" stroke-width="1"><circle cx="573.5" cy="7.6000000000000005" r="2.6"/><path d="M571.5999999999999 9.5 L569.0999999999999 12.0"/></g><g fill="none" stroke="#a8aeb4" stroke-width="1"><circle cx="776.2" cy="7.6000000000000005" r="2.6"/><path d="M774.3 9.5 L771.8 12.0"/></g><g fill="none" stroke="#a8aeb4" stroke-width="1"><circle cx="853.7" cy="7.6000000000000005" r="2.6"/><path d="M851.8 9.5 L849.3 12.0"/></g><g fill="none" stroke="#a9aeb4" stroke-width="1" stroke-linejoin="round"><path d="M1232.8000000000002 5.700000000000001 H1244.0"/><path d="M1236.1000000000001 5.700000000000001 A2.3 2.3 0 0 1 1240.7 5.700000000000001"/><path d="M1233.8000000000002 6.9 L1234.8000000000002 15.3 H1242.0 L1243.0 6.9"/><path d="M1237.2 8.700000000000001 V13.100000000000001 M1239.6000000000001 8.700000000000001 V13.100000000000001"/></g></svg>
<div class="b" style="left:11.0px;top:757.1px;width:1236.0px;height:2.7px;background:#e0e3e7;"></div>
<div class="b" style="left:34.8px;top:739.5px;width:38.7px;height:15.2px;background:#ffffff;border:1px solid #f3f4f5;"></div>
<div class="t" style="left:37.4px;top:743.4px;font-size:10.4px;color:#444;">140</div>
<div class="b" style="left:73.5px;top:739.5px;width:14.8px;height:15.2px;background:#e9ebee;border:1px solid #f2f3f5;"></div>
<div class="b" style="left:133.0px;top:739.5px;width:38.0px;height:15.2px;background:#ffffff;border:1px solid #f3f4f5;"></div>
<div class="t" style="left:134.8px;top:743.4px;font-size:10.4px;color:#444;">10</div>
<div class="b" style="left:171.0px;top:739.5px;width:15.0px;height:15.2px;background:#e9ebee;border:1px solid #f2f3f5;"></div>
<div class="b" style="left:237.3px;top:739.5px;width:208.0px;height:15.2px;background:#ffffff;border:1px solid #f3f4f5;"></div>
<div class="t" style="left:239.0px;top:743.4px;font-size:10.4px;color:#444;letter-spacing:0.12px;">Remove Isolation Spades</div>
<div class="b" style="left:458.5px;top:739.5px;width:55.7px;height:15.2px;background:#ffffff;border:1px solid #f3f4f5;"></div>
<div class="t" style="right:759.8px;top:743.4px;font-size:10.4px;color:#444;">0.00</div>
<div class="b" style="left:520.6px;top:739.5px;width:43.9px;height:15.2px;background:#ffffff;border:1px solid #f3f4f5;"></div>
<div class="t" style="left:523.0px;top:743.4px;font-size:10.4px;color:#444;">H</div>
<div class="b" style="left:564.5px;top:739.5px;width:15.0px;height:15.2px;background:#e9ebee;border:1px solid #f2f3f5;"></div>
<div class="b" style="left:585.9px;top:739.5px;width:55.7px;height:15.2px;background:#ffffff;border:1px solid #f3f4f5;"></div>
<div class="t" style="right:632.4px;top:743.4px;font-size:10.4px;color:#444;">1.00</div>
<div class="b" style="left:648.7px;top:739.5px;width:56.0px;height:15.2px;background:#ffffff;border:1px solid #f3f4f5;"></div>
<div class="b" style="left:711.5px;top:739.5px;width:55.5px;height:15.2px;background:#ffffff;border:1px solid #f3f4f5;"></div>
<div class="t" style="left:713.5px;top:743.4px;font-size:10.4px;color:#444;">SM-13</div>
<div class="b" style="left:767.0px;top:739.5px;width:15.3px;height:15.2px;background:#e9ebee;border:1px solid #f2f3f5;"></div>
<div class="b" style="left:788.8px;top:739.5px;width:55.8px;height:15.2px;background:#ffffff;border:1px solid #f3f4f5;"></div>
<div class="t" style="left:790.8px;top:743.4px;font-size:10.4px;color:#444;">SM</div>
<div class="b" style="left:844.6px;top:739.5px;width:15.4px;height:15.2px;background:#e9ebee;border:1px solid #f2f3f5;"></div>
<div class="b" style="left:865.5px;top:739.5px;width:56.1px;height:15.2px;background:#ffffff;border:1px solid #f3f4f5;"></div>
<div class="t" style="right:352.4px;top:743.4px;font-size:10.4px;color:#444;">1.00</div>
<div class="b" style="left:928.4px;top:739.5px;width:56.4px;height:15.2px;background:#eceef0;border:1px solid #f1f2f4;"></div>
<div class="t" style="right:289.6px;top:743.4px;font-size:10.4px;color:#444;">0.00</div>
<div class="b" style="left:1005.8px;top:739.5px;width:55.5px;height:15.2px;background:#eceef0;border:1px solid #f1f2f4;"></div>
<div class="t" style="right:213.0px;top:743.4px;font-size:10.4px;color:#444;">0.00</div>
<div class="b" style="left:1083.0px;top:739.5px;width:55.7px;height:15.2px;background:#eceef0;border:1px solid #f1f2f4;"></div>
<div class="t" style="right:135.6px;top:743.4px;font-size:10.4px;color:#444;">0.00</div>
<div class="b" style="left:1159.7px;top:739.5px;width:67.1px;height:15.2px;background:#ffffff;border:1px solid #f3f4f5;"></div>
<svg class="b" style="left:0px;top:737px;" width="1272" height="20" viewBox="0 0 1272 20"><path d="M19.3 5.0 L24.6 9.5 L19.3 14.0 Z" fill="none" stroke="#9aa0a8" stroke-width="1"/><g fill="none" stroke="#a8aeb4" stroke-width="1"><circle cx="82.5" cy="7.6000000000000005" r="2.6"/><path d="M80.6 9.5 L78.1 12.0"/></g><g fill="none" stroke="#979da6" stroke-width="1.3"><path d="M175 5.5 L179 9.5 L175 13.5 M179 5.5 L183 9.5 L179 13.5"/></g><g fill="none" stroke="#b3b8bf" stroke-width="0.8"><rect x="212.5" y="3.5" width="12" height="11" fill="#eef0f3"/><path d="M212.5 8.5 H224.5 M212.5 11.5 H224.5 M216.5 5.5 V14.5 M220.5 5.5 V14.5"/><rect x="212.5" y="3.5" width="12" height="2.5" fill="#9ba1a9"/></g><g fill="none" stroke="#a8aeb4" stroke-width="1"><circle cx="573.5" cy="7.6000000000000005" r="2.6"/><path d="M571.5999999999999 9.5 L569.0999999999999 12.0"/></g><g fill="none" stroke="#a8aeb4" stroke-width="1"><circle cx="776.2" cy="7.6000000000000005" r="2.6"/><path d="M774.3 9.5 L771.8 12.0"/></g><g fill="none" stroke="#a8aeb4" stroke-width="1"><circle cx="853.7" cy="7.6000000000000005" r="2.6"/><path d="M851.8 9.5 L849.3 12.0"/></g><g fill="none" stroke="#a9aeb4" stroke-width="1" stroke-linejoin="round"><path d="M1232.8000000000002 5.700000000000001 H1244.0"/><path d="M1236.1000000000001 5.700000000000001 A2.3 2.3 0 0 1 1240.7 5.700000000000001"/><path d="M1233.8000000000002 6.9 L1234.8000000000002 15.3 H1242.0 L1243.0 6.9"/><path d="M1237.2 8.700000000000001 V13.100000000000001 M1239.6000000000001 8.700000000000001 V13.100000000000001"/></g></svg>
</body></html>
